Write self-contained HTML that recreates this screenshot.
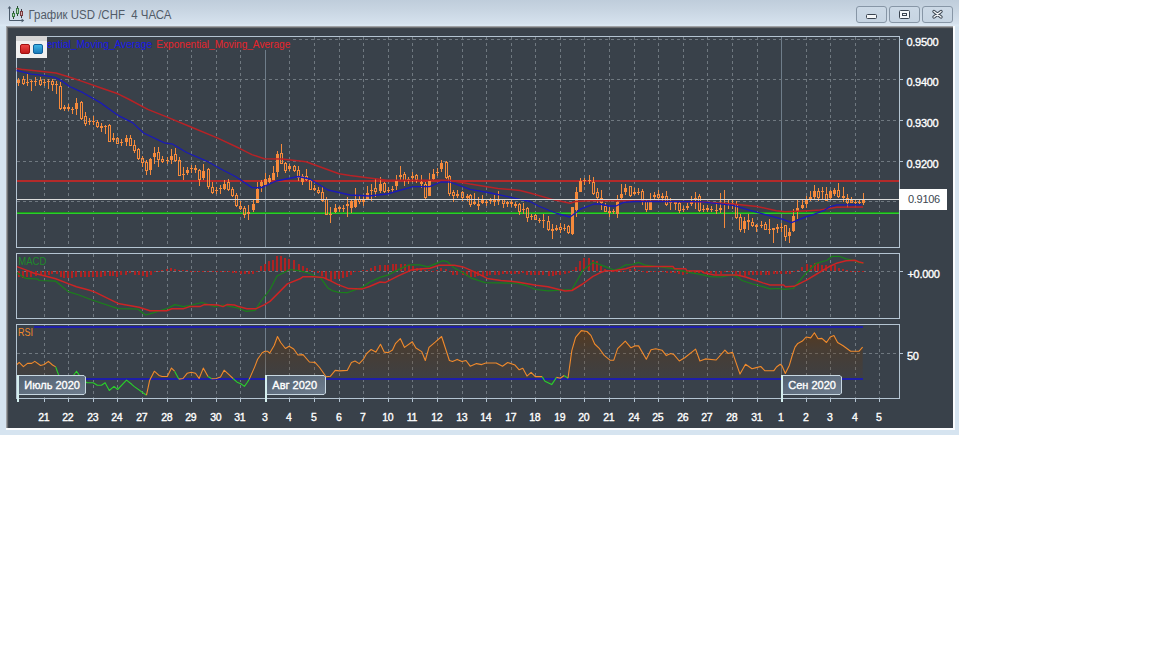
<!DOCTYPE html>
<html><head><meta charset="utf-8"><style>
html,body{margin:0;padding:0;background:#fff;width:1152px;height:648px;overflow:hidden}
#win{position:absolute;left:0;top:0;width:959px;height:435px;background:linear-gradient(#bfcddb,#c8d5e2 10px,#d6e2ee 24px,#dde9f4 25px,#d6e4f0 27px,#d6e4f0);}
#title{position:absolute;left:28px;top:6px;font-family:'Liberation Sans',sans-serif;font-size:11.5px;color:#4a5562;white-space:pre}
.btn{position:absolute;top:6px;width:29px;height:15px;border:1px solid #8796a6;border-radius:3px;background:linear-gradient(#ccd9e6,#c6d4e2)}
#dark{position:absolute;left:6px;top:26px;width:946px;height:401px;background:#39414a;border-top:1px solid #a0a2a6;border-left:1px solid #a0a2a6;box-shadow:inset 1px 1px 0 #6e7072, inset 2px 2px 0 #40464e}
#hl{position:absolute;left:6px;top:26px;width:949px;height:404px;background:#fbfdff}
svg{position:absolute;left:0;top:0}
</style></head><body>
<div id="win">
<div id="hl"></div>
<div id="dark"></div>

<div class="btn" style="left:856px"></div>
<div class="btn" style="left:889px"></div>
<div class="btn" style="left:922px"></div>
</div>
<svg width="1152" height="648">
<text x="28.5" y="19" font-family="Liberation Sans" font-size="12" fill="#525c68" textLength="143" lengthAdjust="spacingAndGlyphs">График USD /CHF&#160; 4 ЧАСА</text>
<g id="icon" fill="none" stroke-width="1">
<path d="M9.5 8 V20.5 H22" stroke="#4a5a6a"/>
<path d="M7.6 8.6 L9.5 6 L11.4 8.6 Z" fill="#4a5a6a" stroke="none"/>
<path d="M21.6 18.6 L24.2 20.5 L21.6 22.4 Z" fill="#4a5a6a" stroke="none"/>
<line x1="13.5" y1="11" x2="13.5" y2="19" stroke="#2e4a36"/>
<rect x="12.5" y="13.5" width="2" height="3" fill="#b8d8b8" stroke="#3a7a44"/>
<line x1="17.5" y1="6" x2="17.5" y2="16" stroke="#2e4a36"/>
<rect x="16.5" y="8.5" width="2" height="5" fill="#b8d8b8" stroke="#3a7a44"/>
<line x1="21.5" y1="9" x2="21.5" y2="18" stroke="#3a3a44"/>
<rect x="20.5" y="11.5" width="2" height="4" fill="#d0b0b0" stroke="#7a3a3e"/>
</g>
<g id="btnicons">
<rect x="866.5" y="14.5" width="10" height="4" rx="1" fill="#f4f6f8" stroke="#3a4450" stroke-width="1"/>
<rect x="899.5" y="10.5" width="10" height="8" rx="1" fill="#f4f6f8" stroke="#3a4450" stroke-width="1"/>
<rect x="902.5" y="13.5" width="4" height="2" fill="none" stroke="#3a4450" stroke-width="1"/>
<path d="M934 11.5 L941 17 M941 11.5 L934 17" stroke="#3a4450" stroke-width="3.4" stroke-linecap="round"/>
<path d="M934 11.5 L941 17 M941 11.5 L934 17" stroke="#f4f6f8" stroke-width="1.5" stroke-linecap="round"/>
</g>
<rect x="16.5" y="36.5" width="883" height="211" fill="none" stroke="#b4c4d2" stroke-width="1"/>
<line x1="44.5" y1="37" x2="44.5" y2="247" stroke="#6f7880" stroke-width="1" stroke-dasharray="3,3"/>
<line x1="68.5" y1="37" x2="68.5" y2="247" stroke="#6f7880" stroke-width="1" stroke-dasharray="3,3"/>
<line x1="93.5" y1="37" x2="93.5" y2="247" stroke="#6f7880" stroke-width="1" stroke-dasharray="3,3"/>
<line x1="117.5" y1="37" x2="117.5" y2="247" stroke="#6f7880" stroke-width="1" stroke-dasharray="3,3"/>
<line x1="142.5" y1="37" x2="142.5" y2="247" stroke="#6f7880" stroke-width="1" stroke-dasharray="3,3"/>
<line x1="167.5" y1="37" x2="167.5" y2="247" stroke="#6f7880" stroke-width="1" stroke-dasharray="3,3"/>
<line x1="191.5" y1="37" x2="191.5" y2="247" stroke="#6f7880" stroke-width="1" stroke-dasharray="3,3"/>
<line x1="216.5" y1="37" x2="216.5" y2="247" stroke="#6f7880" stroke-width="1" stroke-dasharray="3,3"/>
<line x1="240.5" y1="37" x2="240.5" y2="247" stroke="#6f7880" stroke-width="1" stroke-dasharray="3,3"/>
<line x1="289.5" y1="37" x2="289.5" y2="247" stroke="#6f7880" stroke-width="1" stroke-dasharray="3,3"/>
<line x1="314.5" y1="37" x2="314.5" y2="247" stroke="#6f7880" stroke-width="1" stroke-dasharray="3,3"/>
<line x1="339.5" y1="37" x2="339.5" y2="247" stroke="#6f7880" stroke-width="1" stroke-dasharray="3,3"/>
<line x1="363.5" y1="37" x2="363.5" y2="247" stroke="#6f7880" stroke-width="1" stroke-dasharray="3,3"/>
<line x1="388.5" y1="37" x2="388.5" y2="247" stroke="#6f7880" stroke-width="1" stroke-dasharray="3,3"/>
<line x1="412.5" y1="37" x2="412.5" y2="247" stroke="#6f7880" stroke-width="1" stroke-dasharray="3,3"/>
<line x1="437.5" y1="37" x2="437.5" y2="247" stroke="#6f7880" stroke-width="1" stroke-dasharray="3,3"/>
<line x1="462.5" y1="37" x2="462.5" y2="247" stroke="#6f7880" stroke-width="1" stroke-dasharray="3,3"/>
<line x1="486.5" y1="37" x2="486.5" y2="247" stroke="#6f7880" stroke-width="1" stroke-dasharray="3,3"/>
<line x1="511.5" y1="37" x2="511.5" y2="247" stroke="#6f7880" stroke-width="1" stroke-dasharray="3,3"/>
<line x1="535.5" y1="37" x2="535.5" y2="247" stroke="#6f7880" stroke-width="1" stroke-dasharray="3,3"/>
<line x1="560.5" y1="37" x2="560.5" y2="247" stroke="#6f7880" stroke-width="1" stroke-dasharray="3,3"/>
<line x1="584.5" y1="37" x2="584.5" y2="247" stroke="#6f7880" stroke-width="1" stroke-dasharray="3,3"/>
<line x1="609.5" y1="37" x2="609.5" y2="247" stroke="#6f7880" stroke-width="1" stroke-dasharray="3,3"/>
<line x1="634.5" y1="37" x2="634.5" y2="247" stroke="#6f7880" stroke-width="1" stroke-dasharray="3,3"/>
<line x1="658.5" y1="37" x2="658.5" y2="247" stroke="#6f7880" stroke-width="1" stroke-dasharray="3,3"/>
<line x1="683.5" y1="37" x2="683.5" y2="247" stroke="#6f7880" stroke-width="1" stroke-dasharray="3,3"/>
<line x1="707.5" y1="37" x2="707.5" y2="247" stroke="#6f7880" stroke-width="1" stroke-dasharray="3,3"/>
<line x1="732.5" y1="37" x2="732.5" y2="247" stroke="#6f7880" stroke-width="1" stroke-dasharray="3,3"/>
<line x1="757.5" y1="37" x2="757.5" y2="247" stroke="#6f7880" stroke-width="1" stroke-dasharray="3,3"/>
<line x1="806.5" y1="37" x2="806.5" y2="247" stroke="#6f7880" stroke-width="1" stroke-dasharray="3,3"/>
<line x1="830.5" y1="37" x2="830.5" y2="247" stroke="#6f7880" stroke-width="1" stroke-dasharray="3,3"/>
<line x1="855.5" y1="37" x2="855.5" y2="247" stroke="#6f7880" stroke-width="1" stroke-dasharray="3,3"/>
<line x1="879.5" y1="37" x2="879.5" y2="247" stroke="#6f7880" stroke-width="1" stroke-dasharray="3,3"/>
<line x1="265.5" y1="37" x2="265.5" y2="247" stroke="#6f7d8a" stroke-width="1"/>
<line x1="781.5" y1="37" x2="781.5" y2="247" stroke="#6f7d8a" stroke-width="1"/>
<rect x="16.5" y="253.5" width="883" height="65" fill="none" stroke="#b4c4d2" stroke-width="1"/>
<line x1="44.5" y1="254" x2="44.5" y2="318" stroke="#6f7880" stroke-width="1" stroke-dasharray="3,3"/>
<line x1="68.5" y1="254" x2="68.5" y2="318" stroke="#6f7880" stroke-width="1" stroke-dasharray="3,3"/>
<line x1="93.5" y1="254" x2="93.5" y2="318" stroke="#6f7880" stroke-width="1" stroke-dasharray="3,3"/>
<line x1="117.5" y1="254" x2="117.5" y2="318" stroke="#6f7880" stroke-width="1" stroke-dasharray="3,3"/>
<line x1="142.5" y1="254" x2="142.5" y2="318" stroke="#6f7880" stroke-width="1" stroke-dasharray="3,3"/>
<line x1="167.5" y1="254" x2="167.5" y2="318" stroke="#6f7880" stroke-width="1" stroke-dasharray="3,3"/>
<line x1="191.5" y1="254" x2="191.5" y2="318" stroke="#6f7880" stroke-width="1" stroke-dasharray="3,3"/>
<line x1="216.5" y1="254" x2="216.5" y2="318" stroke="#6f7880" stroke-width="1" stroke-dasharray="3,3"/>
<line x1="240.5" y1="254" x2="240.5" y2="318" stroke="#6f7880" stroke-width="1" stroke-dasharray="3,3"/>
<line x1="289.5" y1="254" x2="289.5" y2="318" stroke="#6f7880" stroke-width="1" stroke-dasharray="3,3"/>
<line x1="314.5" y1="254" x2="314.5" y2="318" stroke="#6f7880" stroke-width="1" stroke-dasharray="3,3"/>
<line x1="339.5" y1="254" x2="339.5" y2="318" stroke="#6f7880" stroke-width="1" stroke-dasharray="3,3"/>
<line x1="363.5" y1="254" x2="363.5" y2="318" stroke="#6f7880" stroke-width="1" stroke-dasharray="3,3"/>
<line x1="388.5" y1="254" x2="388.5" y2="318" stroke="#6f7880" stroke-width="1" stroke-dasharray="3,3"/>
<line x1="412.5" y1="254" x2="412.5" y2="318" stroke="#6f7880" stroke-width="1" stroke-dasharray="3,3"/>
<line x1="437.5" y1="254" x2="437.5" y2="318" stroke="#6f7880" stroke-width="1" stroke-dasharray="3,3"/>
<line x1="462.5" y1="254" x2="462.5" y2="318" stroke="#6f7880" stroke-width="1" stroke-dasharray="3,3"/>
<line x1="486.5" y1="254" x2="486.5" y2="318" stroke="#6f7880" stroke-width="1" stroke-dasharray="3,3"/>
<line x1="511.5" y1="254" x2="511.5" y2="318" stroke="#6f7880" stroke-width="1" stroke-dasharray="3,3"/>
<line x1="535.5" y1="254" x2="535.5" y2="318" stroke="#6f7880" stroke-width="1" stroke-dasharray="3,3"/>
<line x1="560.5" y1="254" x2="560.5" y2="318" stroke="#6f7880" stroke-width="1" stroke-dasharray="3,3"/>
<line x1="584.5" y1="254" x2="584.5" y2="318" stroke="#6f7880" stroke-width="1" stroke-dasharray="3,3"/>
<line x1="609.5" y1="254" x2="609.5" y2="318" stroke="#6f7880" stroke-width="1" stroke-dasharray="3,3"/>
<line x1="634.5" y1="254" x2="634.5" y2="318" stroke="#6f7880" stroke-width="1" stroke-dasharray="3,3"/>
<line x1="658.5" y1="254" x2="658.5" y2="318" stroke="#6f7880" stroke-width="1" stroke-dasharray="3,3"/>
<line x1="683.5" y1="254" x2="683.5" y2="318" stroke="#6f7880" stroke-width="1" stroke-dasharray="3,3"/>
<line x1="707.5" y1="254" x2="707.5" y2="318" stroke="#6f7880" stroke-width="1" stroke-dasharray="3,3"/>
<line x1="732.5" y1="254" x2="732.5" y2="318" stroke="#6f7880" stroke-width="1" stroke-dasharray="3,3"/>
<line x1="757.5" y1="254" x2="757.5" y2="318" stroke="#6f7880" stroke-width="1" stroke-dasharray="3,3"/>
<line x1="806.5" y1="254" x2="806.5" y2="318" stroke="#6f7880" stroke-width="1" stroke-dasharray="3,3"/>
<line x1="830.5" y1="254" x2="830.5" y2="318" stroke="#6f7880" stroke-width="1" stroke-dasharray="3,3"/>
<line x1="855.5" y1="254" x2="855.5" y2="318" stroke="#6f7880" stroke-width="1" stroke-dasharray="3,3"/>
<line x1="879.5" y1="254" x2="879.5" y2="318" stroke="#6f7880" stroke-width="1" stroke-dasharray="3,3"/>
<line x1="265.5" y1="254" x2="265.5" y2="318" stroke="#6f7d8a" stroke-width="1"/>
<line x1="781.5" y1="254" x2="781.5" y2="318" stroke="#6f7d8a" stroke-width="1"/>
<rect x="16.5" y="324.5" width="883" height="74" fill="none" stroke="#b4c4d2" stroke-width="1"/>
<line x1="44.5" y1="325" x2="44.5" y2="398" stroke="#6f7880" stroke-width="1" stroke-dasharray="3,3"/>
<line x1="68.5" y1="325" x2="68.5" y2="398" stroke="#6f7880" stroke-width="1" stroke-dasharray="3,3"/>
<line x1="93.5" y1="325" x2="93.5" y2="398" stroke="#6f7880" stroke-width="1" stroke-dasharray="3,3"/>
<line x1="117.5" y1="325" x2="117.5" y2="398" stroke="#6f7880" stroke-width="1" stroke-dasharray="3,3"/>
<line x1="142.5" y1="325" x2="142.5" y2="398" stroke="#6f7880" stroke-width="1" stroke-dasharray="3,3"/>
<line x1="167.5" y1="325" x2="167.5" y2="398" stroke="#6f7880" stroke-width="1" stroke-dasharray="3,3"/>
<line x1="191.5" y1="325" x2="191.5" y2="398" stroke="#6f7880" stroke-width="1" stroke-dasharray="3,3"/>
<line x1="216.5" y1="325" x2="216.5" y2="398" stroke="#6f7880" stroke-width="1" stroke-dasharray="3,3"/>
<line x1="240.5" y1="325" x2="240.5" y2="398" stroke="#6f7880" stroke-width="1" stroke-dasharray="3,3"/>
<line x1="289.5" y1="325" x2="289.5" y2="398" stroke="#6f7880" stroke-width="1" stroke-dasharray="3,3"/>
<line x1="314.5" y1="325" x2="314.5" y2="398" stroke="#6f7880" stroke-width="1" stroke-dasharray="3,3"/>
<line x1="339.5" y1="325" x2="339.5" y2="398" stroke="#6f7880" stroke-width="1" stroke-dasharray="3,3"/>
<line x1="363.5" y1="325" x2="363.5" y2="398" stroke="#6f7880" stroke-width="1" stroke-dasharray="3,3"/>
<line x1="388.5" y1="325" x2="388.5" y2="398" stroke="#6f7880" stroke-width="1" stroke-dasharray="3,3"/>
<line x1="412.5" y1="325" x2="412.5" y2="398" stroke="#6f7880" stroke-width="1" stroke-dasharray="3,3"/>
<line x1="437.5" y1="325" x2="437.5" y2="398" stroke="#6f7880" stroke-width="1" stroke-dasharray="3,3"/>
<line x1="462.5" y1="325" x2="462.5" y2="398" stroke="#6f7880" stroke-width="1" stroke-dasharray="3,3"/>
<line x1="486.5" y1="325" x2="486.5" y2="398" stroke="#6f7880" stroke-width="1" stroke-dasharray="3,3"/>
<line x1="511.5" y1="325" x2="511.5" y2="398" stroke="#6f7880" stroke-width="1" stroke-dasharray="3,3"/>
<line x1="535.5" y1="325" x2="535.5" y2="398" stroke="#6f7880" stroke-width="1" stroke-dasharray="3,3"/>
<line x1="560.5" y1="325" x2="560.5" y2="398" stroke="#6f7880" stroke-width="1" stroke-dasharray="3,3"/>
<line x1="584.5" y1="325" x2="584.5" y2="398" stroke="#6f7880" stroke-width="1" stroke-dasharray="3,3"/>
<line x1="609.5" y1="325" x2="609.5" y2="398" stroke="#6f7880" stroke-width="1" stroke-dasharray="3,3"/>
<line x1="634.5" y1="325" x2="634.5" y2="398" stroke="#6f7880" stroke-width="1" stroke-dasharray="3,3"/>
<line x1="658.5" y1="325" x2="658.5" y2="398" stroke="#6f7880" stroke-width="1" stroke-dasharray="3,3"/>
<line x1="683.5" y1="325" x2="683.5" y2="398" stroke="#6f7880" stroke-width="1" stroke-dasharray="3,3"/>
<line x1="707.5" y1="325" x2="707.5" y2="398" stroke="#6f7880" stroke-width="1" stroke-dasharray="3,3"/>
<line x1="732.5" y1="325" x2="732.5" y2="398" stroke="#6f7880" stroke-width="1" stroke-dasharray="3,3"/>
<line x1="757.5" y1="325" x2="757.5" y2="398" stroke="#6f7880" stroke-width="1" stroke-dasharray="3,3"/>
<line x1="806.5" y1="325" x2="806.5" y2="398" stroke="#6f7880" stroke-width="1" stroke-dasharray="3,3"/>
<line x1="830.5" y1="325" x2="830.5" y2="398" stroke="#6f7880" stroke-width="1" stroke-dasharray="3,3"/>
<line x1="855.5" y1="325" x2="855.5" y2="398" stroke="#6f7880" stroke-width="1" stroke-dasharray="3,3"/>
<line x1="879.5" y1="325" x2="879.5" y2="398" stroke="#6f7880" stroke-width="1" stroke-dasharray="3,3"/>
<line x1="265.5" y1="325" x2="265.5" y2="398" stroke="#6f7d8a" stroke-width="1"/>
<line x1="781.5" y1="325" x2="781.5" y2="398" stroke="#6f7d8a" stroke-width="1"/>
<line x1="17" y1="39.5" x2="899" y2="39.5" stroke="#6f7880" stroke-width="1" stroke-dasharray="3,3"/>
<line x1="899" y1="39.5" x2="903" y2="39.5" stroke="#b4c4d2" stroke-width="1"/>
<line x1="17" y1="79.5" x2="899" y2="79.5" stroke="#6f7880" stroke-width="1" stroke-dasharray="3,3"/>
<line x1="899" y1="79.5" x2="903" y2="79.5" stroke="#b4c4d2" stroke-width="1"/>
<line x1="17" y1="120.5" x2="899" y2="120.5" stroke="#6f7880" stroke-width="1" stroke-dasharray="3,3"/>
<line x1="899" y1="120.5" x2="903" y2="120.5" stroke="#b4c4d2" stroke-width="1"/>
<line x1="17" y1="161.5" x2="899" y2="161.5" stroke="#6f7880" stroke-width="1" stroke-dasharray="3,3"/>
<line x1="899" y1="161.5" x2="903" y2="161.5" stroke="#b4c4d2" stroke-width="1"/>
<line x1="17" y1="201.5" x2="899" y2="201.5" stroke="#6f7880" stroke-width="1" stroke-dasharray="3,3"/>
<line x1="899" y1="201.5" x2="903" y2="201.5" stroke="#b4c4d2" stroke-width="1"/>
<line x1="17" y1="271.5" x2="899" y2="271.5" stroke="#6f7880" stroke-width="1" stroke-dasharray="3,3"/>
<line x1="899" y1="271.5" x2="903" y2="271.5" stroke="#b4c4d2" stroke-width="1"/>
<line x1="17" y1="353.5" x2="899" y2="353.5" stroke="#6f7880" stroke-width="1" stroke-dasharray="3,3"/>
<line x1="899" y1="353.5" x2="903" y2="353.5" stroke="#b4c4d2" stroke-width="1"/>
<line x1="44.5" y1="398" x2="44.5" y2="402" stroke="#b4c4d2" stroke-width="1"/>
<line x1="68.5" y1="398" x2="68.5" y2="402" stroke="#b4c4d2" stroke-width="1"/>
<line x1="93.5" y1="398" x2="93.5" y2="402" stroke="#b4c4d2" stroke-width="1"/>
<line x1="117.5" y1="398" x2="117.5" y2="402" stroke="#b4c4d2" stroke-width="1"/>
<line x1="142.5" y1="398" x2="142.5" y2="402" stroke="#b4c4d2" stroke-width="1"/>
<line x1="167.5" y1="398" x2="167.5" y2="402" stroke="#b4c4d2" stroke-width="1"/>
<line x1="191.5" y1="398" x2="191.5" y2="402" stroke="#b4c4d2" stroke-width="1"/>
<line x1="216.5" y1="398" x2="216.5" y2="402" stroke="#b4c4d2" stroke-width="1"/>
<line x1="240.5" y1="398" x2="240.5" y2="402" stroke="#b4c4d2" stroke-width="1"/>
<line x1="265.5" y1="398" x2="265.5" y2="402" stroke="#b4c4d2" stroke-width="1"/>
<line x1="289.5" y1="398" x2="289.5" y2="402" stroke="#b4c4d2" stroke-width="1"/>
<line x1="314.5" y1="398" x2="314.5" y2="402" stroke="#b4c4d2" stroke-width="1"/>
<line x1="339.5" y1="398" x2="339.5" y2="402" stroke="#b4c4d2" stroke-width="1"/>
<line x1="363.5" y1="398" x2="363.5" y2="402" stroke="#b4c4d2" stroke-width="1"/>
<line x1="388.5" y1="398" x2="388.5" y2="402" stroke="#b4c4d2" stroke-width="1"/>
<line x1="412.5" y1="398" x2="412.5" y2="402" stroke="#b4c4d2" stroke-width="1"/>
<line x1="437.5" y1="398" x2="437.5" y2="402" stroke="#b4c4d2" stroke-width="1"/>
<line x1="462.5" y1="398" x2="462.5" y2="402" stroke="#b4c4d2" stroke-width="1"/>
<line x1="486.5" y1="398" x2="486.5" y2="402" stroke="#b4c4d2" stroke-width="1"/>
<line x1="511.5" y1="398" x2="511.5" y2="402" stroke="#b4c4d2" stroke-width="1"/>
<line x1="535.5" y1="398" x2="535.5" y2="402" stroke="#b4c4d2" stroke-width="1"/>
<line x1="560.5" y1="398" x2="560.5" y2="402" stroke="#b4c4d2" stroke-width="1"/>
<line x1="584.5" y1="398" x2="584.5" y2="402" stroke="#b4c4d2" stroke-width="1"/>
<line x1="609.5" y1="398" x2="609.5" y2="402" stroke="#b4c4d2" stroke-width="1"/>
<line x1="634.5" y1="398" x2="634.5" y2="402" stroke="#b4c4d2" stroke-width="1"/>
<line x1="658.5" y1="398" x2="658.5" y2="402" stroke="#b4c4d2" stroke-width="1"/>
<line x1="683.5" y1="398" x2="683.5" y2="402" stroke="#b4c4d2" stroke-width="1"/>
<line x1="707.5" y1="398" x2="707.5" y2="402" stroke="#b4c4d2" stroke-width="1"/>
<line x1="732.5" y1="398" x2="732.5" y2="402" stroke="#b4c4d2" stroke-width="1"/>
<line x1="757.5" y1="398" x2="757.5" y2="402" stroke="#b4c4d2" stroke-width="1"/>
<line x1="781.5" y1="398" x2="781.5" y2="402" stroke="#b4c4d2" stroke-width="1"/>
<line x1="806.5" y1="398" x2="806.5" y2="402" stroke="#b4c4d2" stroke-width="1"/>
<line x1="830.5" y1="398" x2="830.5" y2="402" stroke="#b4c4d2" stroke-width="1"/>
<line x1="855.5" y1="398" x2="855.5" y2="402" stroke="#b4c4d2" stroke-width="1"/>
<line x1="879.5" y1="398" x2="879.5" y2="402" stroke="#b4c4d2" stroke-width="1"/>
<rect x="17" y="254" width="30" height="12" fill="#39414a"/>
<rect x="17" y="325" width="17" height="13" fill="#39414a"/>
<line x1="17" y1="181" x2="899" y2="181" stroke="#b42a2a" stroke-width="2"/>
<line x1="17" y1="212.5" x2="899" y2="212.5" stroke="#1c9a1c" stroke-width="1"/><line x1="17" y1="213.5" x2="899" y2="213.5" stroke="#2ccc2c" stroke-width="1"/>
<g stroke="#f58a3c" stroke-width="1"><rect x="17" y="80" width="3" height="3" fill="#f58a3c" stroke="none"/><line x1="18.5" y1="78" x2="18.5" y2="80"/><line x1="18.5" y1="83" x2="18.5" y2="86"/><rect x="22.5" y="79.5" width="2" height="4" fill="none"/><line x1="23.5" y1="76" x2="23.5" y2="79"/><line x1="23.5" y1="84" x2="23.5" y2="85"/><rect x="26" y="82" width="3" height="1" fill="#f58a3c" stroke="none"/><line x1="27.5" y1="74" x2="27.5" y2="82"/><line x1="27.5" y1="83" x2="27.5" y2="86"/><rect x="30" y="81" width="3" height="1" fill="#f58a3c" stroke="none"/><line x1="31.5" y1="80" x2="31.5" y2="81"/><line x1="31.5" y1="82" x2="31.5" y2="91"/><rect x="34" y="81" width="3" height="1" fill="#f58a3c" stroke="none"/><line x1="35.5" y1="77" x2="35.5" y2="81"/><line x1="35.5" y1="82" x2="35.5" y2="86"/><rect x="39.5" y="80.5" width="2" height="4" fill="none"/><line x1="40.5" y1="77" x2="40.5" y2="80"/><line x1="40.5" y1="85" x2="40.5" y2="86"/><rect x="43" y="82" width="3" height="1" fill="#f58a3c" stroke="none"/><line x1="44.5" y1="79" x2="44.5" y2="82"/><line x1="44.5" y1="83" x2="44.5" y2="86"/><rect x="47" y="81" width="3" height="1" fill="#f58a3c" stroke="none"/><line x1="48.5" y1="79" x2="48.5" y2="81"/><line x1="48.5" y1="82" x2="48.5" y2="89"/><rect x="51.5" y="81.5" width="2" height="3" fill="none"/><line x1="52.5" y1="79" x2="52.5" y2="81"/><line x1="52.5" y1="85" x2="52.5" y2="91"/><rect x="55" y="84" width="3" height="1" fill="#f58a3c" stroke="none"/><line x1="56.5" y1="81" x2="56.5" y2="84"/><line x1="56.5" y1="85" x2="56.5" y2="94"/><rect x="59.5" y="86.5" width="2" height="22" fill="none"/><line x1="60.5" y1="82" x2="60.5" y2="86"/><line x1="60.5" y1="109" x2="60.5" y2="110"/><rect x="63" y="107" width="3" height="2" fill="#f58a3c" stroke="none"/><line x1="64.5" y1="105" x2="64.5" y2="107"/><line x1="64.5" y1="109" x2="64.5" y2="111"/><rect x="67" y="107" width="3" height="2" fill="#f58a3c" stroke="none"/><line x1="68.5" y1="104" x2="68.5" y2="107"/><line x1="68.5" y1="109" x2="68.5" y2="111"/><rect x="71" y="109" width="3" height="1" fill="#f58a3c" stroke="none"/><line x1="72.5" y1="107" x2="72.5" y2="109"/><line x1="72.5" y1="110" x2="72.5" y2="114"/><rect x="75" y="103" width="3" height="6" fill="#f58a3c" stroke="none"/><line x1="76.5" y1="98" x2="76.5" y2="103"/><line x1="76.5" y1="109" x2="76.5" y2="115"/><rect x="80.5" y="102.5" width="2" height="16" fill="none"/><line x1="81.5" y1="101" x2="81.5" y2="102"/><line x1="81.5" y1="119" x2="81.5" y2="120"/><rect x="84.5" y="116.5" width="2" height="7" fill="none"/><line x1="85.5" y1="112" x2="85.5" y2="116"/><line x1="85.5" y1="124" x2="85.5" y2="126"/><rect x="88" y="121" width="3" height="1" fill="#f58a3c" stroke="none"/><line x1="89.5" y1="118" x2="89.5" y2="121"/><line x1="89.5" y1="122" x2="89.5" y2="125"/><rect x="92" y="121" width="3" height="1" fill="#f58a3c" stroke="none"/><line x1="93.5" y1="116" x2="93.5" y2="121"/><line x1="93.5" y1="122" x2="93.5" y2="125"/><rect x="96.5" y="122.5" width="2" height="4" fill="none"/><line x1="97.5" y1="120" x2="97.5" y2="122"/><line x1="97.5" y1="127" x2="97.5" y2="128"/><rect x="100" y="126" width="3" height="2" fill="#f58a3c" stroke="none"/><line x1="101.5" y1="123" x2="101.5" y2="126"/><line x1="101.5" y1="128" x2="101.5" y2="132"/><rect x="104" y="126" width="3" height="1" fill="#f58a3c" stroke="none"/><line x1="105.5" y1="125" x2="105.5" y2="126"/><line x1="105.5" y1="127" x2="105.5" y2="134"/><rect x="108.5" y="125.5" width="2" height="16" fill="none"/><line x1="109.5" y1="124" x2="109.5" y2="125"/><rect x="112" y="138" width="3" height="2" fill="#f58a3c" stroke="none"/><line x1="113.5" y1="133" x2="113.5" y2="138"/><line x1="113.5" y1="140" x2="113.5" y2="142"/><rect x="116.5" y="138.5" width="2" height="5" fill="none"/><line x1="117.5" y1="137" x2="117.5" y2="138"/><rect x="120" y="142" width="3" height="1" fill="#f58a3c" stroke="none"/><line x1="121.5" y1="139" x2="121.5" y2="142"/><line x1="121.5" y1="143" x2="121.5" y2="146"/><rect x="125" y="138" width="3" height="4" fill="#f58a3c" stroke="none"/><line x1="126.5" y1="135" x2="126.5" y2="138"/><line x1="126.5" y1="142" x2="126.5" y2="146"/><rect x="129.5" y="138.5" width="2" height="7" fill="none"/><line x1="130.5" y1="135" x2="130.5" y2="138"/><rect x="133.5" y="145.5" width="2" height="5" fill="none"/><line x1="134.5" y1="140" x2="134.5" y2="145"/><line x1="134.5" y1="151" x2="134.5" y2="153"/><rect x="137.5" y="149.5" width="2" height="9" fill="none"/><line x1="138.5" y1="148" x2="138.5" y2="149"/><line x1="138.5" y1="159" x2="138.5" y2="160"/><rect x="141.5" y="158.5" width="2" height="4" fill="none"/><line x1="142.5" y1="156" x2="142.5" y2="158"/><line x1="142.5" y1="163" x2="142.5" y2="167"/><rect x="145.5" y="162.5" width="2" height="8" fill="none"/><line x1="146.5" y1="160" x2="146.5" y2="162"/><line x1="146.5" y1="171" x2="146.5" y2="175"/><rect x="149" y="159" width="3" height="11" fill="#f58a3c" stroke="none"/><line x1="150.5" y1="158" x2="150.5" y2="159"/><line x1="150.5" y1="170" x2="150.5" y2="175"/><rect x="153" y="153" width="3" height="4" fill="#f58a3c" stroke="none"/><line x1="154.5" y1="147" x2="154.5" y2="153"/><line x1="154.5" y1="157" x2="154.5" y2="164"/><rect x="157.5" y="152.5" width="2" height="7" fill="none"/><line x1="158.5" y1="147" x2="158.5" y2="152"/><line x1="158.5" y1="160" x2="158.5" y2="167"/><rect x="161.5" y="159.5" width="2" height="2" fill="none"/><line x1="162.5" y1="156" x2="162.5" y2="159"/><line x1="162.5" y1="162" x2="162.5" y2="163"/><rect x="166" y="160" width="3" height="1" fill="#f58a3c" stroke="none"/><line x1="167.5" y1="157" x2="167.5" y2="160"/><line x1="167.5" y1="161" x2="167.5" y2="164"/><rect x="170" y="156" width="3" height="4" fill="#f58a3c" stroke="none"/><line x1="171.5" y1="149" x2="171.5" y2="156"/><line x1="171.5" y1="160" x2="171.5" y2="164"/><rect x="174.5" y="154.5" width="2" height="6" fill="none"/><line x1="175.5" y1="148" x2="175.5" y2="154"/><line x1="175.5" y1="161" x2="175.5" y2="162"/><rect x="178.5" y="160.5" width="2" height="15" fill="none"/><line x1="179.5" y1="157" x2="179.5" y2="160"/><rect x="182" y="174" width="3" height="1" fill="#f58a3c" stroke="none"/><line x1="183.5" y1="167" x2="183.5" y2="174"/><line x1="183.5" y1="175" x2="183.5" y2="180"/><rect x="186" y="170" width="3" height="3" fill="#f58a3c" stroke="none"/><line x1="187.5" y1="167" x2="187.5" y2="170"/><line x1="187.5" y1="173" x2="187.5" y2="175"/><rect x="190" y="168" width="3" height="1" fill="#f58a3c" stroke="none"/><line x1="191.5" y1="165" x2="191.5" y2="168"/><line x1="191.5" y1="169" x2="191.5" y2="173"/><rect x="194" y="168" width="3" height="2" fill="#f58a3c" stroke="none"/><line x1="195.5" y1="165" x2="195.5" y2="168"/><line x1="195.5" y1="170" x2="195.5" y2="173"/><rect x="198.5" y="170.5" width="2" height="9" fill="none"/><line x1="199.5" y1="169" x2="199.5" y2="170"/><line x1="199.5" y1="180" x2="199.5" y2="186"/><rect x="202" y="171" width="3" height="7" fill="#f58a3c" stroke="none"/><line x1="203.5" y1="164" x2="203.5" y2="171"/><line x1="203.5" y1="178" x2="203.5" y2="180"/><rect x="207.5" y="169.5" width="2" height="17" fill="none"/><line x1="208.5" y1="168" x2="208.5" y2="169"/><line x1="208.5" y1="187" x2="208.5" y2="189"/><rect x="211.5" y="187.5" width="2" height="5" fill="none"/><line x1="212.5" y1="182" x2="212.5" y2="187"/><line x1="212.5" y1="193" x2="212.5" y2="194"/><rect x="215" y="190" width="3" height="1" fill="#f58a3c" stroke="none"/><line x1="216.5" y1="187" x2="216.5" y2="190"/><line x1="216.5" y1="191" x2="216.5" y2="194"/><rect x="219" y="188" width="3" height="1" fill="#f58a3c" stroke="none"/><line x1="220.5" y1="185" x2="220.5" y2="188"/><line x1="220.5" y1="189" x2="220.5" y2="194"/><rect x="223" y="184" width="3" height="5" fill="#f58a3c" stroke="none"/><line x1="224.5" y1="180" x2="224.5" y2="184"/><line x1="224.5" y1="189" x2="224.5" y2="190"/><rect x="227.5" y="182.5" width="2" height="7" fill="none"/><line x1="228.5" y1="179" x2="228.5" y2="182"/><line x1="228.5" y1="190" x2="228.5" y2="191"/><rect x="231.5" y="189.5" width="2" height="6" fill="none"/><line x1="232.5" y1="187" x2="232.5" y2="189"/><line x1="232.5" y1="196" x2="232.5" y2="197"/><rect x="235.5" y="195.5" width="2" height="10" fill="none"/><line x1="236.5" y1="193" x2="236.5" y2="195"/><line x1="236.5" y1="206" x2="236.5" y2="207"/><rect x="239.5" y="206.5" width="2" height="2" fill="none"/><line x1="240.5" y1="201" x2="240.5" y2="206"/><line x1="240.5" y1="209" x2="240.5" y2="210"/><rect x="243.5" y="208.5" width="2" height="6" fill="none"/><line x1="244.5" y1="206" x2="244.5" y2="208"/><line x1="244.5" y1="215" x2="244.5" y2="218"/><rect x="247" y="212" width="3" height="2" fill="#f58a3c" stroke="none"/><line x1="248.5" y1="205" x2="248.5" y2="212"/><line x1="248.5" y1="214" x2="248.5" y2="220"/><rect x="252" y="204" width="3" height="6" fill="#f58a3c" stroke="none"/><line x1="253.5" y1="200" x2="253.5" y2="204"/><line x1="253.5" y1="210" x2="253.5" y2="212"/><rect x="256" y="189" width="3" height="14" fill="#f58a3c" stroke="none"/><line x1="257.5" y1="182" x2="257.5" y2="189"/><rect x="260" y="182" width="3" height="4" fill="#f58a3c" stroke="none"/><line x1="261.5" y1="180" x2="261.5" y2="182"/><line x1="261.5" y1="186" x2="261.5" y2="192"/><rect x="264" y="179" width="3" height="6" fill="#f58a3c" stroke="none"/><line x1="265.5" y1="173" x2="265.5" y2="179"/><line x1="265.5" y1="185" x2="265.5" y2="187"/><rect x="268" y="178" width="3" height="4" fill="#f58a3c" stroke="none"/><line x1="269.5" y1="175" x2="269.5" y2="178"/><line x1="269.5" y1="182" x2="269.5" y2="184"/><rect x="272" y="173" width="3" height="7" fill="#f58a3c" stroke="none"/><line x1="273.5" y1="166" x2="273.5" y2="173"/><rect x="276" y="154" width="3" height="18" fill="#f58a3c" stroke="none"/><line x1="277.5" y1="151" x2="277.5" y2="154"/><line x1="277.5" y1="172" x2="277.5" y2="177"/><rect x="280.5" y="153.5" width="2" height="10" fill="none"/><line x1="281.5" y1="144" x2="281.5" y2="153"/><rect x="284.5" y="163.5" width="2" height="7" fill="none"/><line x1="285.5" y1="162" x2="285.5" y2="163"/><line x1="285.5" y1="171" x2="285.5" y2="173"/><rect x="288" y="166" width="3" height="3" fill="#f58a3c" stroke="none"/><line x1="289.5" y1="164" x2="289.5" y2="166"/><line x1="289.5" y1="169" x2="289.5" y2="171"/><rect x="293.5" y="166.5" width="2" height="4" fill="none"/><line x1="294.5" y1="165" x2="294.5" y2="166"/><line x1="294.5" y1="171" x2="294.5" y2="172"/><rect x="297.5" y="170.5" width="2" height="7" fill="none"/><line x1="298.5" y1="166" x2="298.5" y2="170"/><line x1="298.5" y1="178" x2="298.5" y2="181"/><rect x="301" y="176" width="3" height="6" fill="#f58a3c" stroke="none"/><line x1="302.5" y1="174" x2="302.5" y2="176"/><line x1="302.5" y1="182" x2="302.5" y2="185"/><rect x="305.5" y="176.5" width="2" height="3" fill="none"/><line x1="306.5" y1="169" x2="306.5" y2="176"/><line x1="306.5" y1="180" x2="306.5" y2="181"/><rect x="309.5" y="180.5" width="2" height="9" fill="none"/><line x1="310.5" y1="179" x2="310.5" y2="180"/><rect x="313" y="188" width="3" height="2" fill="#f58a3c" stroke="none"/><line x1="314.5" y1="185" x2="314.5" y2="188"/><line x1="314.5" y1="190" x2="314.5" y2="191"/><rect x="317.5" y="190.5" width="2" height="2" fill="none"/><line x1="318.5" y1="187" x2="318.5" y2="190"/><line x1="318.5" y1="193" x2="318.5" y2="194"/><rect x="321.5" y="192.5" width="2" height="8" fill="none"/><line x1="322.5" y1="187" x2="322.5" y2="192"/><line x1="322.5" y1="201" x2="322.5" y2="202"/><rect x="325.5" y="199.5" width="2" height="15" fill="none"/><line x1="326.5" y1="197" x2="326.5" y2="199"/><rect x="329" y="214" width="3" height="1" fill="#f58a3c" stroke="none"/><line x1="330.5" y1="207" x2="330.5" y2="214"/><line x1="330.5" y1="215" x2="330.5" y2="223"/><rect x="334" y="208" width="3" height="4" fill="#f58a3c" stroke="none"/><line x1="335.5" y1="204" x2="335.5" y2="208"/><line x1="335.5" y1="212" x2="335.5" y2="213"/><rect x="338" y="207" width="3" height="2" fill="#f58a3c" stroke="none"/><line x1="339.5" y1="206" x2="339.5" y2="207"/><line x1="339.5" y1="209" x2="339.5" y2="212"/><rect x="342" y="208" width="3" height="1" fill="#f58a3c" stroke="none"/><line x1="343.5" y1="205" x2="343.5" y2="208"/><line x1="343.5" y1="209" x2="343.5" y2="212"/><rect x="346" y="204" width="3" height="2" fill="#f58a3c" stroke="none"/><line x1="347.5" y1="197" x2="347.5" y2="204"/><line x1="347.5" y1="206" x2="347.5" y2="217"/><rect x="350" y="201" width="3" height="7" fill="#f58a3c" stroke="none"/><line x1="351.5" y1="200" x2="351.5" y2="201"/><line x1="351.5" y1="208" x2="351.5" y2="213"/><rect x="354" y="199" width="3" height="8" fill="#f58a3c" stroke="none"/><line x1="355.5" y1="188" x2="355.5" y2="199"/><line x1="355.5" y1="207" x2="355.5" y2="208"/><rect x="358.5" y="199.5" width="2" height="2" fill="none"/><line x1="359.5" y1="196" x2="359.5" y2="199"/><line x1="359.5" y1="202" x2="359.5" y2="204"/><rect x="362" y="199" width="3" height="3" fill="#f58a3c" stroke="none"/><line x1="363.5" y1="196" x2="363.5" y2="199"/><line x1="363.5" y1="202" x2="363.5" y2="206"/><rect x="366" y="193" width="3" height="6" fill="#f58a3c" stroke="none"/><line x1="367.5" y1="186" x2="367.5" y2="193"/><rect x="370" y="190" width="3" height="1" fill="#f58a3c" stroke="none"/><line x1="371.5" y1="184" x2="371.5" y2="190"/><line x1="371.5" y1="191" x2="371.5" y2="201"/><rect x="374.5" y="188.5" width="2" height="3" fill="none"/><line x1="375.5" y1="178" x2="375.5" y2="188"/><line x1="375.5" y1="192" x2="375.5" y2="197"/><rect x="379" y="184" width="3" height="7" fill="#f58a3c" stroke="none"/><line x1="380.5" y1="177" x2="380.5" y2="184"/><line x1="380.5" y1="191" x2="380.5" y2="193"/><rect x="383.5" y="183.5" width="2" height="8" fill="none"/><line x1="384.5" y1="182" x2="384.5" y2="183"/><line x1="384.5" y1="192" x2="384.5" y2="193"/><rect x="387" y="190" width="3" height="1" fill="#f58a3c" stroke="none"/><line x1="388.5" y1="187" x2="388.5" y2="190"/><line x1="388.5" y1="191" x2="388.5" y2="193"/><rect x="391" y="189" width="3" height="1" fill="#f58a3c" stroke="none"/><line x1="392.5" y1="186" x2="392.5" y2="189"/><line x1="392.5" y1="190" x2="392.5" y2="192"/><rect x="395" y="180" width="3" height="6" fill="#f58a3c" stroke="none"/><line x1="396.5" y1="175" x2="396.5" y2="180"/><line x1="396.5" y1="186" x2="396.5" y2="190"/><rect x="399" y="175" width="3" height="2" fill="#f58a3c" stroke="none"/><line x1="400.5" y1="166" x2="400.5" y2="175"/><line x1="400.5" y1="177" x2="400.5" y2="181"/><rect x="403.5" y="174.5" width="2" height="6" fill="none"/><line x1="404.5" y1="172" x2="404.5" y2="174"/><line x1="404.5" y1="181" x2="404.5" y2="186"/><rect x="407" y="179" width="3" height="2" fill="#f58a3c" stroke="none"/><line x1="408.5" y1="177" x2="408.5" y2="179"/><line x1="408.5" y1="181" x2="408.5" y2="184"/><rect x="411" y="176" width="3" height="2" fill="#f58a3c" stroke="none"/><line x1="412.5" y1="172" x2="412.5" y2="176"/><line x1="412.5" y1="178" x2="412.5" y2="182"/><rect x="415.5" y="175.5" width="2" height="4" fill="none"/><line x1="416.5" y1="174" x2="416.5" y2="175"/><line x1="416.5" y1="180" x2="416.5" y2="183"/><rect x="420" y="182" width="3" height="2" fill="#f58a3c" stroke="none"/><line x1="421.5" y1="175" x2="421.5" y2="182"/><line x1="421.5" y1="184" x2="421.5" y2="188"/><rect x="424.5" y="184.5" width="2" height="13" fill="none"/><line x1="425.5" y1="182" x2="425.5" y2="184"/><line x1="425.5" y1="198" x2="425.5" y2="199"/><rect x="428" y="180" width="3" height="16" fill="#f58a3c" stroke="none"/><line x1="429.5" y1="173" x2="429.5" y2="180"/><rect x="432" y="174" width="3" height="5" fill="#f58a3c" stroke="none"/><line x1="433.5" y1="169" x2="433.5" y2="174"/><line x1="433.5" y1="179" x2="433.5" y2="180"/><rect x="436" y="172" width="3" height="1" fill="#f58a3c" stroke="none"/><line x1="437.5" y1="168" x2="437.5" y2="172"/><line x1="437.5" y1="173" x2="437.5" y2="176"/><rect x="440" y="163" width="3" height="6" fill="#f58a3c" stroke="none"/><line x1="441.5" y1="160" x2="441.5" y2="163"/><line x1="441.5" y1="169" x2="441.5" y2="172"/><rect x="445.5" y="162.5" width="2" height="15" fill="none"/><line x1="446.5" y1="161" x2="446.5" y2="162"/><line x1="446.5" y1="178" x2="446.5" y2="179"/><rect x="448.5" y="176.5" width="2" height="17" fill="none"/><line x1="449.5" y1="175" x2="449.5" y2="176"/><line x1="449.5" y1="194" x2="449.5" y2="196"/><rect x="452.5" y="192.5" width="2" height="3" fill="none"/><line x1="453.5" y1="190" x2="453.5" y2="192"/><line x1="453.5" y1="196" x2="453.5" y2="202"/><rect x="456" y="194" width="3" height="2" fill="#f58a3c" stroke="none"/><line x1="457.5" y1="190" x2="457.5" y2="194"/><line x1="457.5" y1="196" x2="457.5" y2="198"/><rect x="461.5" y="192.5" width="2" height="5" fill="none"/><line x1="462.5" y1="191" x2="462.5" y2="192"/><line x1="462.5" y1="198" x2="462.5" y2="201"/><rect x="466" y="196" width="3" height="2" fill="#f58a3c" stroke="none"/><line x1="467.5" y1="194" x2="467.5" y2="196"/><line x1="467.5" y1="198" x2="467.5" y2="201"/><rect x="469.5" y="195.5" width="2" height="9" fill="none"/><line x1="470.5" y1="194" x2="470.5" y2="195"/><line x1="470.5" y1="205" x2="470.5" y2="207"/><rect x="473" y="202" width="3" height="2" fill="#f58a3c" stroke="none"/><line x1="474.5" y1="193" x2="474.5" y2="202"/><line x1="474.5" y1="204" x2="474.5" y2="205"/><rect x="477" y="204" width="3" height="2" fill="#f58a3c" stroke="none"/><line x1="478.5" y1="197" x2="478.5" y2="204"/><line x1="478.5" y1="206" x2="478.5" y2="210"/><rect x="481" y="199" width="3" height="4" fill="#f58a3c" stroke="none"/><line x1="482.5" y1="195" x2="482.5" y2="199"/><line x1="482.5" y1="203" x2="482.5" y2="204"/><rect x="485" y="202" width="3" height="1" fill="#f58a3c" stroke="none"/><line x1="486.5" y1="199" x2="486.5" y2="202"/><line x1="486.5" y1="203" x2="486.5" y2="206"/><rect x="489" y="200" width="3" height="1" fill="#f58a3c" stroke="none"/><line x1="490.5" y1="198" x2="490.5" y2="200"/><line x1="490.5" y1="201" x2="490.5" y2="204"/><rect x="493" y="200" width="3" height="2" fill="#f58a3c" stroke="none"/><line x1="494.5" y1="195" x2="494.5" y2="200"/><line x1="494.5" y1="202" x2="494.5" y2="206"/><rect x="497" y="200" width="3" height="1" fill="#f58a3c" stroke="none"/><line x1="498.5" y1="191" x2="498.5" y2="200"/><line x1="498.5" y1="201" x2="498.5" y2="205"/><rect x="502.5" y="199.5" width="2" height="4" fill="none"/><line x1="503.5" y1="204" x2="503.5" y2="208"/><rect x="506" y="202" width="3" height="2" fill="#f58a3c" stroke="none"/><line x1="507.5" y1="201" x2="507.5" y2="202"/><line x1="507.5" y1="204" x2="507.5" y2="207"/><rect x="510" y="202" width="3" height="2" fill="#f58a3c" stroke="none"/><line x1="511.5" y1="200" x2="511.5" y2="202"/><line x1="511.5" y1="204" x2="511.5" y2="207"/><rect x="514" y="204" width="3" height="2" fill="#f58a3c" stroke="none"/><line x1="515.5" y1="202" x2="515.5" y2="204"/><line x1="515.5" y1="206" x2="515.5" y2="208"/><rect x="518.5" y="204.5" width="2" height="7" fill="none"/><line x1="519.5" y1="203" x2="519.5" y2="204"/><line x1="519.5" y1="212" x2="519.5" y2="215"/><rect x="522" y="209" width="3" height="1" fill="#f58a3c" stroke="none"/><line x1="523.5" y1="203" x2="523.5" y2="209"/><line x1="523.5" y1="210" x2="523.5" y2="214"/><rect x="526.5" y="208.5" width="2" height="9" fill="none"/><line x1="527.5" y1="207" x2="527.5" y2="208"/><line x1="527.5" y1="218" x2="527.5" y2="222"/><rect x="530" y="216" width="3" height="1" fill="#f58a3c" stroke="none"/><line x1="531.5" y1="214" x2="531.5" y2="216"/><line x1="531.5" y1="217" x2="531.5" y2="220"/><rect x="534.5" y="215.5" width="2" height="4" fill="none"/><line x1="535.5" y1="214" x2="535.5" y2="215"/><rect x="538" y="220" width="3" height="1" fill="#f58a3c" stroke="none"/><line x1="539.5" y1="218" x2="539.5" y2="220"/><line x1="539.5" y1="221" x2="539.5" y2="223"/><rect x="542" y="220" width="3" height="1" fill="#f58a3c" stroke="none"/><line x1="543.5" y1="214" x2="543.5" y2="220"/><line x1="543.5" y1="221" x2="543.5" y2="228"/><rect x="547.5" y="221.5" width="2" height="8" fill="none"/><line x1="548.5" y1="216" x2="548.5" y2="221"/><line x1="548.5" y1="230" x2="548.5" y2="231"/><rect x="551" y="229" width="3" height="2" fill="#f58a3c" stroke="none"/><line x1="552.5" y1="224" x2="552.5" y2="229"/><line x1="552.5" y1="231" x2="552.5" y2="239"/><rect x="555" y="228" width="3" height="2" fill="#f58a3c" stroke="none"/><line x1="556.5" y1="225" x2="556.5" y2="228"/><line x1="556.5" y1="230" x2="556.5" y2="231"/><rect x="559.5" y="227.5" width="2" height="2" fill="none"/><line x1="560.5" y1="223" x2="560.5" y2="227"/><line x1="560.5" y1="230" x2="560.5" y2="233"/><rect x="563" y="228" width="3" height="1" fill="#f58a3c" stroke="none"/><line x1="564.5" y1="224" x2="564.5" y2="228"/><line x1="564.5" y1="229" x2="564.5" y2="231"/><rect x="567.5" y="226.5" width="2" height="6" fill="none"/><line x1="568.5" y1="225" x2="568.5" y2="226"/><line x1="568.5" y1="233" x2="568.5" y2="234"/><rect x="571" y="207" width="3" height="27" fill="#f58a3c" stroke="none"/><line x1="572.5" y1="234" x2="572.5" y2="235"/><rect x="575" y="192" width="3" height="18" fill="#f58a3c" stroke="none"/><line x1="576.5" y1="187" x2="576.5" y2="192"/><line x1="576.5" y1="210" x2="576.5" y2="217"/><rect x="579" y="181" width="3" height="11" fill="#f58a3c" stroke="none"/><line x1="580.5" y1="178" x2="580.5" y2="181"/><rect x="583" y="180" width="3" height="1" fill="#f58a3c" stroke="none"/><line x1="584.5" y1="178" x2="584.5" y2="180"/><line x1="584.5" y1="181" x2="584.5" y2="185"/><rect x="588" y="180" width="3" height="1" fill="#f58a3c" stroke="none"/><line x1="589.5" y1="175" x2="589.5" y2="180"/><line x1="589.5" y1="181" x2="589.5" y2="184"/><rect x="592.5" y="182.5" width="2" height="11" fill="none"/><line x1="593.5" y1="177" x2="593.5" y2="182"/><line x1="593.5" y1="194" x2="593.5" y2="195"/><rect x="596.5" y="192.5" width="2" height="5" fill="none"/><line x1="597.5" y1="188" x2="597.5" y2="192"/><line x1="597.5" y1="198" x2="597.5" y2="203"/><rect x="600.5" y="198.5" width="2" height="4" fill="none"/><line x1="601.5" y1="190" x2="601.5" y2="198"/><line x1="601.5" y1="203" x2="601.5" y2="210"/><rect x="604.5" y="206.5" width="2" height="5" fill="none"/><line x1="605.5" y1="203" x2="605.5" y2="206"/><rect x="608" y="211" width="3" height="2" fill="#f58a3c" stroke="none"/><line x1="609.5" y1="207" x2="609.5" y2="211"/><line x1="609.5" y1="213" x2="609.5" y2="217"/><rect x="612" y="211" width="3" height="1" fill="#f58a3c" stroke="none"/><line x1="613.5" y1="209" x2="613.5" y2="211"/><line x1="613.5" y1="212" x2="613.5" y2="214"/><rect x="616" y="202" width="3" height="12" fill="#f58a3c" stroke="none"/><line x1="617.5" y1="195" x2="617.5" y2="202"/><line x1="617.5" y1="214" x2="617.5" y2="218"/><rect x="620" y="194" width="3" height="4" fill="#f58a3c" stroke="none"/><line x1="621.5" y1="184" x2="621.5" y2="194"/><line x1="621.5" y1="198" x2="621.5" y2="199"/><rect x="624" y="188" width="3" height="4" fill="#f58a3c" stroke="none"/><line x1="625.5" y1="184" x2="625.5" y2="188"/><line x1="625.5" y1="192" x2="625.5" y2="195"/><rect x="629.5" y="186.5" width="2" height="9" fill="none"/><line x1="630.5" y1="196" x2="630.5" y2="197"/><rect x="633" y="192" width="3" height="2" fill="#f58a3c" stroke="none"/><line x1="634.5" y1="188" x2="634.5" y2="192"/><line x1="634.5" y1="194" x2="634.5" y2="195"/><rect x="637" y="192" width="3" height="1" fill="#f58a3c" stroke="none"/><line x1="638.5" y1="188" x2="638.5" y2="192"/><line x1="638.5" y1="193" x2="638.5" y2="195"/><rect x="641.5" y="191.5" width="2" height="9" fill="none"/><line x1="642.5" y1="189" x2="642.5" y2="191"/><line x1="642.5" y1="201" x2="642.5" y2="205"/><rect x="645.5" y="201.5" width="2" height="8" fill="none"/><line x1="646.5" y1="199" x2="646.5" y2="201"/><line x1="646.5" y1="210" x2="646.5" y2="212"/><rect x="649" y="202" width="3" height="8" fill="#f58a3c" stroke="none"/><line x1="650.5" y1="193" x2="650.5" y2="202"/><rect x="653" y="195" width="3" height="2" fill="#f58a3c" stroke="none"/><line x1="654.5" y1="192" x2="654.5" y2="195"/><line x1="654.5" y1="197" x2="654.5" y2="199"/><rect x="657.5" y="194.5" width="2" height="3" fill="none"/><line x1="658.5" y1="190" x2="658.5" y2="194"/><line x1="658.5" y1="198" x2="658.5" y2="199"/><rect x="661" y="196" width="3" height="2" fill="#f58a3c" stroke="none"/><line x1="662.5" y1="193" x2="662.5" y2="196"/><line x1="662.5" y1="198" x2="662.5" y2="201"/><rect x="665.5" y="196.5" width="2" height="8" fill="none"/><line x1="666.5" y1="191" x2="666.5" y2="196"/><line x1="666.5" y1="205" x2="666.5" y2="206"/><rect x="669" y="201" width="3" height="2" fill="#f58a3c" stroke="none"/><line x1="670.5" y1="198" x2="670.5" y2="201"/><line x1="670.5" y1="203" x2="670.5" y2="210"/><rect x="674" y="202" width="3" height="2" fill="#f58a3c" stroke="none"/><line x1="675.5" y1="204" x2="675.5" y2="210"/><rect x="678.5" y="203.5" width="2" height="7" fill="none"/><line x1="679.5" y1="202" x2="679.5" y2="203"/><line x1="679.5" y1="211" x2="679.5" y2="213"/><rect x="682" y="209" width="3" height="1" fill="#f58a3c" stroke="none"/><line x1="683.5" y1="206" x2="683.5" y2="209"/><line x1="683.5" y1="210" x2="683.5" y2="212"/><rect x="686" y="206" width="3" height="2" fill="#f58a3c" stroke="none"/><line x1="687.5" y1="203" x2="687.5" y2="206"/><line x1="687.5" y1="208" x2="687.5" y2="210"/><rect x="690" y="202" width="3" height="2" fill="#f58a3c" stroke="none"/><line x1="691.5" y1="196" x2="691.5" y2="202"/><line x1="691.5" y1="204" x2="691.5" y2="206"/><rect x="694" y="198" width="3" height="2" fill="#f58a3c" stroke="none"/><line x1="695.5" y1="192" x2="695.5" y2="198"/><line x1="695.5" y1="200" x2="695.5" y2="209"/><rect x="698.5" y="196.5" width="2" height="14" fill="none"/><line x1="699.5" y1="194" x2="699.5" y2="196"/><line x1="699.5" y1="211" x2="699.5" y2="212"/><rect x="702" y="209" width="3" height="1" fill="#f58a3c" stroke="none"/><line x1="703.5" y1="205" x2="703.5" y2="209"/><line x1="703.5" y1="210" x2="703.5" y2="212"/><rect x="706" y="208" width="3" height="2" fill="#f58a3c" stroke="none"/><line x1="707.5" y1="205" x2="707.5" y2="208"/><line x1="707.5" y1="210" x2="707.5" y2="212"/><rect x="710" y="209" width="3" height="1" fill="#f58a3c" stroke="none"/><line x1="711.5" y1="206" x2="711.5" y2="209"/><line x1="711.5" y1="210" x2="711.5" y2="212"/><rect x="715" y="210" width="3" height="1" fill="#f58a3c" stroke="none"/><line x1="716.5" y1="202" x2="716.5" y2="210"/><line x1="716.5" y1="211" x2="716.5" y2="214"/><rect x="719" y="208" width="3" height="2" fill="#f58a3c" stroke="none"/><line x1="720.5" y1="193" x2="720.5" y2="208"/><line x1="720.5" y1="210" x2="720.5" y2="213"/><rect x="723" y="203" width="3" height="1" fill="#f58a3c" stroke="none"/><line x1="724.5" y1="190" x2="724.5" y2="203"/><line x1="724.5" y1="204" x2="724.5" y2="228"/><rect x="727" y="203" width="3" height="2" fill="#f58a3c" stroke="none"/><line x1="728.5" y1="200" x2="728.5" y2="203"/><line x1="728.5" y1="205" x2="728.5" y2="209"/><rect x="731" y="203" width="3" height="1" fill="#f58a3c" stroke="none"/><line x1="732.5" y1="200" x2="732.5" y2="203"/><line x1="732.5" y1="204" x2="732.5" y2="209"/><rect x="735.5" y="204.5" width="2" height="13" fill="none"/><line x1="736.5" y1="201" x2="736.5" y2="204"/><line x1="736.5" y1="218" x2="736.5" y2="219"/><rect x="739.5" y="217.5" width="2" height="12" fill="none"/><line x1="740.5" y1="214" x2="740.5" y2="217"/><line x1="740.5" y1="230" x2="740.5" y2="232"/><rect x="743" y="221" width="3" height="8" fill="#f58a3c" stroke="none"/><line x1="744.5" y1="217" x2="744.5" y2="221"/><line x1="744.5" y1="229" x2="744.5" y2="233"/><rect x="747" y="220" width="3" height="2" fill="#f58a3c" stroke="none"/><line x1="748.5" y1="214" x2="748.5" y2="220"/><line x1="748.5" y1="222" x2="748.5" y2="230"/><rect x="751.5" y="222.5" width="2" height="3" fill="none"/><line x1="752.5" y1="218" x2="752.5" y2="222"/><line x1="752.5" y1="226" x2="752.5" y2="227"/><rect x="755" y="225" width="3" height="2" fill="#f58a3c" stroke="none"/><line x1="756.5" y1="224" x2="756.5" y2="225"/><line x1="756.5" y1="227" x2="756.5" y2="232"/><rect x="760" y="225" width="3" height="1" fill="#f58a3c" stroke="none"/><line x1="761.5" y1="221" x2="761.5" y2="225"/><line x1="761.5" y1="226" x2="761.5" y2="228"/><rect x="764.5" y="224.5" width="2" height="5" fill="none"/><line x1="765.5" y1="222" x2="765.5" y2="224"/><rect x="768" y="229" width="3" height="1" fill="#f58a3c" stroke="none"/><line x1="769.5" y1="219" x2="769.5" y2="229"/><line x1="769.5" y1="230" x2="769.5" y2="234"/><rect x="772" y="228" width="3" height="2" fill="#f58a3c" stroke="none"/><line x1="773.5" y1="230" x2="773.5" y2="243"/><rect x="776" y="227" width="3" height="2" fill="#f58a3c" stroke="none"/><line x1="777.5" y1="224" x2="777.5" y2="227"/><line x1="777.5" y1="229" x2="777.5" y2="233"/><rect x="780" y="227" width="3" height="1" fill="#f58a3c" stroke="none"/><line x1="781.5" y1="223" x2="781.5" y2="227"/><line x1="781.5" y1="228" x2="781.5" y2="232"/><rect x="784.5" y="225.5" width="2" height="11" fill="none"/><line x1="785.5" y1="237" x2="785.5" y2="241"/><rect x="788" y="232" width="3" height="4" fill="#f58a3c" stroke="none"/><line x1="789.5" y1="228" x2="789.5" y2="232"/><line x1="789.5" y1="236" x2="789.5" y2="243"/><rect x="792" y="216" width="3" height="15" fill="#f58a3c" stroke="none"/><line x1="793.5" y1="209" x2="793.5" y2="216"/><line x1="793.5" y1="231" x2="793.5" y2="232"/><rect x="796" y="208" width="3" height="4" fill="#f58a3c" stroke="none"/><line x1="797.5" y1="200" x2="797.5" y2="208"/><line x1="797.5" y1="212" x2="797.5" y2="219"/><rect x="801" y="205" width="3" height="3" fill="#f58a3c" stroke="none"/><line x1="802.5" y1="200" x2="802.5" y2="205"/><line x1="802.5" y1="208" x2="802.5" y2="209"/><rect x="805" y="200" width="3" height="4" fill="#f58a3c" stroke="none"/><line x1="806.5" y1="196" x2="806.5" y2="200"/><line x1="806.5" y1="204" x2="806.5" y2="208"/><rect x="809" y="197" width="3" height="3" fill="#f58a3c" stroke="none"/><line x1="810.5" y1="191" x2="810.5" y2="197"/><line x1="810.5" y1="200" x2="810.5" y2="201"/><rect x="813" y="191" width="3" height="6" fill="#f58a3c" stroke="none"/><line x1="814.5" y1="185" x2="814.5" y2="191"/><line x1="814.5" y1="197" x2="814.5" y2="199"/><rect x="817.5" y="191.5" width="2" height="6" fill="none"/><line x1="818.5" y1="188" x2="818.5" y2="191"/><line x1="818.5" y1="198" x2="818.5" y2="201"/><rect x="821" y="191" width="3" height="1" fill="#f58a3c" stroke="none"/><line x1="822.5" y1="187" x2="822.5" y2="191"/><line x1="822.5" y1="192" x2="822.5" y2="199"/><rect x="825.5" y="194.5" width="2" height="6" fill="none"/><line x1="826.5" y1="187" x2="826.5" y2="194"/><rect x="829" y="191" width="3" height="7" fill="#f58a3c" stroke="none"/><line x1="830.5" y1="190" x2="830.5" y2="191"/><line x1="830.5" y1="198" x2="830.5" y2="200"/><rect x="833" y="190" width="3" height="4" fill="#f58a3c" stroke="none"/><line x1="834.5" y1="188" x2="834.5" y2="190"/><line x1="834.5" y1="194" x2="834.5" y2="196"/><rect x="837.5" y="190.5" width="2" height="6" fill="none"/><line x1="838.5" y1="183" x2="838.5" y2="190"/><line x1="838.5" y1="197" x2="838.5" y2="198"/><rect x="842" y="196" width="3" height="2" fill="#f58a3c" stroke="none"/><line x1="843.5" y1="187" x2="843.5" y2="196"/><line x1="843.5" y1="198" x2="843.5" y2="202"/><rect x="846.5" y="198.5" width="2" height="4" fill="none"/><line x1="847.5" y1="194" x2="847.5" y2="198"/><line x1="847.5" y1="203" x2="847.5" y2="208"/><rect x="850.5" y="200.5" width="2" height="2" fill="none"/><line x1="851.5" y1="197" x2="851.5" y2="200"/><rect x="854" y="202" width="3" height="1" fill="#f58a3c" stroke="none"/><line x1="855.5" y1="199" x2="855.5" y2="202"/><line x1="855.5" y1="203" x2="855.5" y2="204"/><rect x="858" y="202" width="3" height="1" fill="#f58a3c" stroke="none"/><line x1="859.5" y1="199" x2="859.5" y2="202"/><line x1="859.5" y1="203" x2="859.5" y2="204"/><rect x="862" y="199" width="3" height="4" fill="#f58a3c" stroke="none"/><line x1="863.5" y1="193" x2="863.5" y2="199"/><line x1="863.5" y1="203" x2="863.5" y2="205"/></g>
<polyline points="16.5,68.6 21.4,69.3 37.5,71.1 56.0,73.0 68.3,76.7 83.0,81.6 100.4,87.8 116.5,93.3 120.0,94.9 128.3,99.0 147.8,109.4 167.2,117.1 192.2,127.5 217.2,137.9 239.4,148.3 251.9,154.6 264.4,158.8 282.0,158.9 306.0,161.7 339.0,173.7 350.0,175.6 387.0,180.2 450.0,180.2 470.0,184.0 498.0,188.5 520.0,190.4 530.0,193.0 553.0,199.6 570.0,203.3 575.5,201.5 594.0,200.5 700.0,201.7 733.0,204.0 757.0,206.4 776.4,210.7 785.0,211.8 808.3,210.7 819.9,210.0 827.6,208.8 836.9,207.2 863.1,206.9" fill="none" stroke="#b82226" stroke-width="1.5" stroke-linejoin="round"/>
<polyline points="16.5,70.5 21.4,71.7 31.3,74.2 43.6,75.4 54.7,77.3 61.0,80.4 69.6,86.5 83.0,92.7 100.4,102.6 116.5,114.3 120.0,116.4 132.5,122.6 143.6,133.0 164.4,142.8 172.8,144.2 186.7,152.5 206.1,160.8 222.8,170.0 235.5,176.5 252.0,187.6 261.5,187.6 276.0,181.0 298.5,176.5 309.6,179.0 328.0,190.0 350.0,195.0 368.5,196.0 387.0,194.0 413.0,186.7 429.6,186.7 440.7,182.0 450.0,182.0 470.0,189.4 490.7,193.0 513.0,197.8 530.0,201.5 538.5,206.0 557.0,213.5 570.0,217.0 581.0,208.9 594.0,204.0 599.6,204.0 609.0,206.0 616.0,206.0 623.7,202.4 634.8,201.5 700.0,201.7 733.0,205.3 759.0,212.9 783.0,219.4 791.5,222.6 806.0,216.9 813.0,214.6 823.7,210.7 829.0,207.2 836.9,204.9 861.6,204.9" fill="none" stroke="#1a1ab8" stroke-width="1.3" stroke-linejoin="round"/>
<line x1="17" y1="199.5" x2="899" y2="199.5" stroke="#dcdcdc" stroke-width="1"/>
<g fill="#b02222"><rect x="18" y="271" width="2" height="6"/><rect x="22" y="271" width="2" height="7"/><rect x="26" y="271" width="2" height="6"/><rect x="30" y="271" width="2" height="6"/><rect x="35" y="271" width="2" height="5"/><rect x="40" y="271" width="2" height="4"/><rect x="44" y="271" width="2" height="5"/><rect x="48" y="271" width="2" height="4"/><rect x="51" y="271" width="2" height="3"/><rect x="56" y="271" width="2" height="3"/><rect x="60" y="271" width="2" height="6"/><rect x="63" y="271" width="2" height="7"/><rect x="67" y="271" width="2" height="7"/><rect x="71" y="271" width="2" height="7"/><rect x="75" y="271" width="2" height="6"/><rect x="80" y="271" width="2" height="6"/><rect x="84" y="271" width="2" height="6"/><rect x="88" y="271" width="2" height="6"/><rect x="92" y="271" width="2" height="6"/><rect x="96" y="271" width="2" height="6"/><rect x="100" y="271" width="2" height="6"/><rect x="104" y="271" width="2" height="5"/><rect x="109" y="271" width="2" height="5"/><rect x="112" y="271" width="2" height="5"/><rect x="116" y="271" width="2" height="6"/><rect x="120" y="271" width="2" height="4"/><rect x="125" y="271" width="2" height="4"/><rect x="129" y="271" width="2" height="2"/><rect x="134" y="271" width="2" height="4"/><rect x="138" y="271" width="2" height="4"/><rect x="142" y="271" width="2" height="5"/><rect x="146" y="271" width="2" height="6"/><rect x="150" y="271" width="2" height="4"/><rect x="154" y="271" width="2" height="1"/><rect x="158" y="271" width="2" height="1"/><rect x="161" y="270" width="2" height="1"/><rect x="166" y="269" width="2" height="2"/><rect x="170" y="268" width="2" height="3"/><rect x="174" y="269" width="2" height="2"/><rect x="178" y="270" width="2" height="1"/><rect x="182" y="270" width="2" height="1"/><rect x="186" y="270" width="2" height="1"/><rect x="190" y="271" width="2" height="1"/><rect x="194" y="271" width="2" height="1"/><rect x="198" y="271" width="2" height="1"/><rect x="202" y="271" width="2" height="1"/><rect x="207" y="271" width="2" height="1"/><rect x="212" y="271" width="2" height="1"/><rect x="216" y="271" width="2" height="1"/><rect x="220" y="271" width="2" height="1"/><rect x="224" y="271" width="2" height="1"/><rect x="228" y="271" width="2" height="1"/><rect x="232" y="271" width="2" height="2"/><rect x="235" y="271" width="2" height="2"/><rect x="240" y="271" width="2" height="3"/><rect x="244" y="271" width="2" height="3"/><rect x="248" y="271" width="2" height="3"/><rect x="252" y="271" width="2" height="3"/><rect x="256" y="271" width="2" height="1"/><rect x="260" y="266" width="2" height="5"/><rect x="264" y="264" width="2" height="7"/><rect x="268" y="261" width="2" height="10"/><rect x="272" y="260" width="2" height="11"/><rect x="276" y="256" width="2" height="15"/><rect x="280" y="256" width="2" height="15"/><rect x="284" y="258" width="2" height="13"/><rect x="288" y="259" width="2" height="12"/><rect x="293" y="260" width="2" height="11"/><rect x="298" y="264" width="2" height="7"/><rect x="302" y="266" width="2" height="5"/><rect x="306" y="268" width="2" height="3"/><rect x="309" y="270" width="2" height="1"/><rect x="313" y="271" width="2" height="1"/><rect x="317" y="271" width="2" height="2"/><rect x="321" y="271" width="2" height="5"/><rect x="325" y="271" width="2" height="8"/><rect x="330" y="271" width="2" height="10"/><rect x="334" y="271" width="2" height="8"/><rect x="338" y="271" width="2" height="8"/><rect x="342" y="271" width="2" height="7"/><rect x="346" y="271" width="2" height="6"/><rect x="350" y="271" width="2" height="4"/><rect x="354" y="271" width="2" height="1"/><rect x="358" y="271" width="2" height="1"/><rect x="362" y="270" width="2" height="1"/><rect x="366" y="270" width="2" height="1"/><rect x="370" y="268" width="2" height="3"/><rect x="374" y="266" width="2" height="5"/><rect x="379" y="265" width="2" height="6"/><rect x="384" y="265" width="2" height="6"/><rect x="387" y="265" width="2" height="6"/><rect x="392" y="264" width="2" height="7"/><rect x="395" y="264" width="2" height="7"/><rect x="400" y="264" width="2" height="7"/><rect x="404" y="264" width="2" height="7"/><rect x="408" y="265" width="2" height="6"/><rect x="412" y="266" width="2" height="5"/><rect x="416" y="268" width="2" height="3"/><rect x="420" y="268" width="2" height="3"/><rect x="424" y="270" width="2" height="1"/><rect x="428" y="270" width="2" height="1"/><rect x="432" y="271" width="2" height="1"/><rect x="436" y="270" width="2" height="1"/><rect x="440" y="268" width="2" height="3"/><rect x="445" y="269" width="2" height="2"/><rect x="449" y="271" width="2" height="1"/><rect x="452" y="271" width="2" height="4"/><rect x="456" y="271" width="2" height="4"/><rect x="462" y="271" width="2" height="4"/><rect x="466" y="271" width="2" height="5"/><rect x="470" y="271" width="2" height="6"/><rect x="474" y="271" width="2" height="6"/><rect x="477" y="271" width="2" height="5"/><rect x="482" y="271" width="2" height="5"/><rect x="486" y="271" width="2" height="5"/><rect x="489" y="271" width="2" height="4"/><rect x="494" y="271" width="2" height="4"/><rect x="498" y="271" width="2" height="4"/><rect x="502" y="271" width="2" height="3"/><rect x="506" y="271" width="2" height="3"/><rect x="510" y="271" width="2" height="3"/><rect x="514" y="271" width="2" height="3"/><rect x="518" y="271" width="2" height="3"/><rect x="522" y="271" width="2" height="2"/><rect x="526" y="271" width="2" height="4"/><rect x="530" y="271" width="2" height="4"/><rect x="534" y="271" width="2" height="4"/><rect x="538" y="271" width="2" height="4"/><rect x="542" y="271" width="2" height="4"/><rect x="548" y="271" width="2" height="5"/><rect x="552" y="271" width="2" height="5"/><rect x="555" y="271" width="2" height="4"/><rect x="559" y="271" width="2" height="4"/><rect x="564" y="271" width="2" height="3"/><rect x="568" y="271" width="2" height="2"/><rect x="572" y="270" width="2" height="1"/><rect x="575" y="267" width="2" height="4"/><rect x="579" y="261" width="2" height="10"/><rect x="583" y="258" width="2" height="13"/><rect x="588" y="258" width="2" height="13"/><rect x="592" y="260" width="2" height="11"/><rect x="596" y="261" width="2" height="10"/><rect x="600" y="266" width="2" height="5"/><rect x="604" y="269" width="2" height="2"/><rect x="608" y="270" width="2" height="1"/><rect x="612" y="271" width="2" height="1"/><rect x="616" y="271" width="2" height="1"/><rect x="620" y="271" width="2" height="1"/><rect x="624" y="271" width="2" height="1"/><rect x="629" y="269" width="2" height="2"/><rect x="634" y="269" width="2" height="2"/><rect x="638" y="270" width="2" height="1"/><rect x="642" y="271" width="2" height="1"/><rect x="646" y="271" width="2" height="2"/><rect x="650" y="271" width="2" height="1"/><rect x="654" y="271" width="2" height="1"/><rect x="658" y="271" width="2" height="1"/><rect x="662" y="271" width="2" height="1"/><rect x="666" y="271" width="2" height="2"/><rect x="670" y="271" width="2" height="2"/><rect x="674" y="271" width="2" height="2"/><rect x="678" y="271" width="2" height="3"/><rect x="682" y="271" width="2" height="4"/><rect x="686" y="271" width="2" height="3"/><rect x="690" y="271" width="2" height="2"/><rect x="694" y="271" width="2" height="2"/><rect x="698" y="271" width="2" height="2"/><rect x="702" y="271" width="2" height="2"/><rect x="706" y="271" width="2" height="2"/><rect x="710" y="271" width="2" height="2"/><rect x="715" y="271" width="2" height="3"/><rect x="720" y="271" width="2" height="3"/><rect x="724" y="271" width="2" height="1"/><rect x="728" y="271" width="2" height="1"/><rect x="732" y="271" width="2" height="1"/><rect x="735" y="271" width="2" height="3"/><rect x="739" y="271" width="2" height="5"/><rect x="744" y="271" width="2" height="5"/><rect x="748" y="271" width="2" height="4"/><rect x="752" y="271" width="2" height="4"/><rect x="756" y="271" width="2" height="4"/><rect x="760" y="271" width="2" height="4"/><rect x="765" y="271" width="2" height="4"/><rect x="768" y="271" width="2" height="4"/><rect x="773" y="271" width="2" height="3"/><rect x="776" y="271" width="2" height="3"/><rect x="780" y="271" width="2" height="3"/><rect x="785" y="271" width="2" height="3"/><rect x="789" y="271" width="2" height="3"/><rect x="793" y="271" width="2" height="1"/><rect x="797" y="270" width="2" height="1"/><rect x="801" y="267" width="2" height="4"/><rect x="806" y="264" width="2" height="7"/><rect x="810" y="265" width="2" height="6"/><rect x="814" y="263" width="2" height="8"/><rect x="817" y="263" width="2" height="8"/><rect x="821" y="265" width="2" height="6"/><rect x="825" y="265" width="2" height="6"/><rect x="830" y="265" width="2" height="6"/><rect x="834" y="265" width="2" height="6"/><rect x="838" y="268" width="2" height="3"/><rect x="842" y="269" width="2" height="2"/><rect x="846" y="270" width="2" height="1"/><rect x="850" y="271" width="2" height="1"/><rect x="854" y="271" width="2" height="1"/><rect x="858" y="271" width="2" height="1"/><rect x="862" y="271" width="2" height="1"/></g>
<polyline points="17.0,272.8 21.0,275.6 25.8,278.4 37.6,279.0 39.0,280.5 55.7,281.2 59.1,284.0 68.2,291.6 79.0,295.0 92.0,300.0 118.0,308.6 137.7,309.0 145.5,315.0 150.0,313.9 156.2,311.9 167.7,308.2 175.0,304.6 183.3,306.6 191.7,305.0 202.0,302.5 214.6,306.6 223.0,305.0 238.5,308.2 245.8,311.3 255.2,310.3 260.4,302.0 270.0,289.5 277.0,276.0 290.0,269.5 300.0,270.8 308.3,273.0 314.6,275.7 320.8,278.1 327.8,287.9 332.0,290.6 338.9,292.4 347.2,292.7 352.8,290.6 362.5,287.2 369.4,282.3 380.0,277.4 388.4,274.9 398.8,269.4 409.2,264.8 419.7,264.8 428.0,266.9 437.0,263.1 442.6,260.7 447.4,261.7 454.4,268.0 463.0,272.8 472.0,278.4 485.2,282.6 517.1,283.2 525.4,285.3 536.0,289.5 548.0,290.9 572.0,289.5 582.6,270.8 593.0,262.4 603.4,265.9 614.0,270.0 619.0,268.7 625.9,264.8 632.8,264.5 638.4,262.4 645.3,265.2 660.6,267.0 673.1,268.7 681.4,270.8 692.0,272.8 699.0,274.2 710.8,276.6 721.2,277.0 731.7,274.9 737.2,276.6 742.0,280.5 752.5,284.0 762.9,286.7 770.0,288.8 778.4,288.5 784.5,289.3 793.2,288.5 806.2,272.8 816.6,263.3 827.0,260.2 832.2,256.3 839.2,256.3 846.1,258.9 854.8,260.7 859.1,262.9 863.5,262.9" fill="none" stroke="#1a801a" stroke-width="1.2" stroke-linejoin="round"/>
<polyline points="17.0,266.6 24.4,269.4 34.8,273.5 45.2,276.0 55.7,278.7 68.2,283.6 76.5,286.7 86.9,289.5 94.0,291.6 118.0,303.4 139.0,307.3 150.0,310.8 166.7,310.8 171.9,308.7 183.3,308.7 189.6,306.6 200.0,306.6 204.2,304.6 217.7,305.0 223.0,306.6 227.0,304.6 234.4,305.0 238.5,306.6 246.9,308.7 256.2,308.7 264.6,304.6 270.0,301.4 287.4,283.9 300.0,278.8 302.8,276.8 313.9,276.8 322.9,277.4 329.2,280.2 337.5,284.4 348.6,288.6 362.5,288.9 369.4,286.5 380.0,282.0 385.0,282.6 398.8,275.6 411.3,270.0 419.7,269.0 430.0,268.3 439.0,265.2 454.4,265.2 463.0,266.9 473.4,271.4 487.2,278.4 501.0,280.5 517.1,281.9 528.9,283.9 536.0,285.3 548.0,286.7 565.0,290.9 572.0,290.5 582.6,284.0 593.0,276.3 600.0,272.8 605.5,270.8 614.0,270.8 625.9,268.7 632.8,266.6 673.1,266.6 674.5,268.7 685.6,268.7 687.0,270.8 701.8,271.1 703.9,272.8 714.3,274.9 737.2,274.9 745.6,277.0 756.0,280.5 762.9,282.9 770.0,285.0 783.6,285.0 785.4,286.7 794.0,286.3 807.0,279.8 820.0,272.0 828.8,266.8 837.4,262.9 846.1,260.7 854.8,260.2 859.1,262.0 863.5,262.9" fill="none" stroke="#cc2424" stroke-width="1.5" stroke-linejoin="round"/>
<defs><linearGradient id="rg" gradientUnits="userSpaceOnUse" x1="0" y1="327" x2="0" y2="379"><stop offset="0" stop-color="#6a3400" stop-opacity="0.62"/><stop offset="0.45" stop-color="#6a3400" stop-opacity="0.3"/><stop offset="1" stop-color="#6a3400" stop-opacity="0.1"/></linearGradient></defs>
<polygon points="17.0,378.5 17.0,364.5 19.2,362.4 23.4,366.6 27.5,363.4 31.7,363.4 34.8,361.4 40.6,365.5 44.2,364.5 48.4,361.4 52.5,365.0 55.7,366.9 57.2,371.2 58.8,375.4 62.0,378.5 66.0,378.5 70.0,378.0 73.0,376.0 76.5,371.2 79.0,374.9 82.0,378.5 86.9,378.5 93.2,378.5 97.3,378.5 101.5,378.5 105.1,378.5 109.3,378.5 114.0,378.5 117.6,378.5 126.5,378.5 131.7,378.5 134.0,378.5 146.5,378.5 149.6,378.5 154.3,371.2 159.0,375.4 162.1,376.5 167.3,376.5 171.5,368.1 174.6,371.2 178.8,378.5 183.0,378.5 187.1,373.3 191.3,372.3 195.5,373.3 199.1,378.5 203.3,368.1 208.0,376.5 211.6,378.5 216.3,378.5 220.5,377.0 224.1,370.2 229.8,375.4 233.0,378.5 237.1,378.5 240.8,378.5 244.4,378.5 247.4,378.5 249.3,378.5 254.8,366.6 257.6,359.2 262.2,352.7 265.0,351.3 267.8,351.3 269.6,353.2 274.3,345.3 277.5,336.5 280.7,342.5 285.4,348.5 289.1,346.2 293.7,349.0 297.9,355.0 303.0,354.6 309.4,362.0 315.0,362.4 319.6,367.5 326.1,376.8 330.3,376.3 335.2,370.4 339.4,370.9 347.2,370.4 351.4,362.5 355.0,361.0 359.2,363.6 363.3,359.4 366.5,353.7 371.1,349.5 375.8,352.1 380.5,344.3 384.2,352.1 388.3,352.6 392.5,350.0 395.6,343.3 400.3,338.6 404.5,347.4 412.3,341.7 415.9,348.0 421.7,351.6 425.3,360.5 429.0,347.4 435.2,342.2 441.6,336.5 449.4,360.5 452.5,361.5 457.2,359.4 461.9,361.5 466.0,360.5 470.2,366.2 476.5,363.6 481.7,364.6 485.8,363.0 496.2,363.0 502.5,366.2 507.7,362.5 515.0,365.1 519.2,369.8 522.8,368.3 527.0,376.1 531.1,372.4 535.3,376.6 542.1,376.6 545.0,378.5 551.7,378.5 556.5,377.4 560.3,378.3 564.1,375.5 568.0,378.3 571.8,350.6 575.6,337.3 581.3,330.6 587.0,331.5 590.9,335.4 594.7,344.0 599.5,348.7 604.2,355.4 610.0,360.2 613.8,360.2 617.6,348.7 625.3,341.1 631.0,347.8 634.8,345.9 638.6,345.9 646.3,359.2 651.0,349.7 655.8,348.7 662.0,350.2 666.3,355.6 670.6,353.5 673.9,354.6 679.3,361.0 684.7,357.8 695.6,349.1 699.9,361.0 705.3,358.9 716.2,360.0 724.9,350.2 728.1,353.5 732.5,352.4 740.0,374.1 745.5,364.3 752.0,368.7 756.3,367.6 760.7,366.5 765.0,370.8 773.7,370.8 776.5,367.0 780.2,364.3 782.0,365.7 785.3,373.5 789.4,365.2 792.2,355.5 795.0,347.1 797.8,343.4 802.4,341.1 806.1,337.0 810.7,337.9 814.4,332.8 818.1,338.8 821.9,338.4 826.5,342.5 830.2,337.0 833.9,335.6 837.6,342.5 843.1,345.8 850.6,351.3 858.9,351.3 862.6,347.1 862.7,378.5" fill="url(#rg)"/>
<line x1="34" y1="327" x2="863" y2="327" stroke="#1e1ea8" stroke-width="2"/>
<line x1="17" y1="379" x2="863" y2="379" stroke="#1e1ea8" stroke-width="2"/>
<polyline points="17.0,364.5 19.2,362.4 23.4,366.6 27.5,363.4 31.7,363.4 34.8,361.4 40.6,365.5 44.2,364.5 48.4,361.4 52.5,365.0 55.7,366.9" fill="none" stroke="#f08a2c" stroke-width="1.1" stroke-linejoin="round"/>
<polyline points="55.7,366.9 57.2,371.2 58.8,375.4 62.0,379.0 66.0,381.0 70.0,378.0 73.0,376.0 76.5,371.2 79.0,374.9 82.0,379.0 86.9,382.7 93.2,382.7 97.3,385.3 101.5,385.3 105.1,382.7 109.3,390.5 114.0,386.4 117.6,389.5 126.5,380.1 131.7,384.3 134.0,386.4 146.5,395.2" fill="none" stroke="#2ad02a" stroke-width="1.1" stroke-linejoin="round"/>
<polyline points="146.5,395.2 149.6,380.6 154.3,371.2 159.0,375.4 162.1,376.5 167.3,376.5 171.5,368.1 174.6,371.2" fill="none" stroke="#f08a2c" stroke-width="1.1" stroke-linejoin="round"/>
<polyline points="174.6,371.2 178.8,379.1" fill="none" stroke="#2ad02a" stroke-width="1.1" stroke-linejoin="round"/>
<polyline points="178.8,379.1 183.0,378.5 187.1,373.3 191.3,372.3 195.5,373.3 199.1,378.5 203.3,368.1 208.0,376.5" fill="none" stroke="#f08a2c" stroke-width="1.1" stroke-linejoin="round"/>
<polyline points="208.0,376.5 211.6,378.8" fill="none" stroke="#2ad02a" stroke-width="1.1" stroke-linejoin="round"/>
<polyline points="211.6,378.8 216.3,378.5 220.5,377.0 224.1,370.2 229.8,375.4 233.0,378.5" fill="none" stroke="#f08a2c" stroke-width="1.1" stroke-linejoin="round"/>
<polyline points="233.0,378.5 237.1,382.2 240.8,383.8 244.4,386.4 247.4,382.3 249.3,379.1" fill="none" stroke="#2ad02a" stroke-width="1.1" stroke-linejoin="round"/>
<polyline points="249.3,379.1 254.8,366.6 257.6,359.2 262.2,352.7 265.0,351.3 267.8,351.3 269.6,353.2 274.3,345.3 277.5,336.5 280.7,342.5 285.4,348.5 289.1,346.2 293.7,349.0 297.9,355.0 303.0,354.6 309.4,362.0 315.0,362.4 319.6,367.5 326.1,376.8 330.3,376.3 335.2,370.4 339.4,370.9 347.2,370.4 351.4,362.5 355.0,361.0 359.2,363.6 363.3,359.4 366.5,353.7 371.1,349.5 375.8,352.1 380.5,344.3 384.2,352.1 388.3,352.6 392.5,350.0 395.6,343.3 400.3,338.6 404.5,347.4 412.3,341.7 415.9,348.0 421.7,351.6 425.3,360.5 429.0,347.4 435.2,342.2 441.6,336.5 449.4,360.5 452.5,361.5 457.2,359.4 461.9,361.5 466.0,360.5 470.2,366.2 476.5,363.6 481.7,364.6 485.8,363.0 496.2,363.0 502.5,366.2 507.7,362.5 515.0,365.1 519.2,369.8 522.8,368.3 527.0,376.1 531.1,372.4 535.3,376.6 542.1,376.6" fill="none" stroke="#f08a2c" stroke-width="1.1" stroke-linejoin="round"/>
<polyline points="542.1,376.6 545.0,381.2 551.7,384.6 556.5,377.4" fill="none" stroke="#2ad02a" stroke-width="1.1" stroke-linejoin="round"/>
<polyline points="556.5,377.4 560.3,378.3 564.1,375.5" fill="none" stroke="#f08a2c" stroke-width="1.1" stroke-linejoin="round"/>
<polyline points="564.1,375.5 568.0,378.3" fill="none" stroke="#2ad02a" stroke-width="1.1" stroke-linejoin="round"/>
<polyline points="568.0,378.3 571.8,350.6 575.6,337.3 581.3,330.6 587.0,331.5 590.9,335.4 594.7,344.0 599.5,348.7 604.2,355.4 610.0,360.2 613.8,360.2 617.6,348.7 625.3,341.1 631.0,347.8 634.8,345.9 638.6,345.9 646.3,359.2 651.0,349.7 655.8,348.7 662.0,350.2 666.3,355.6 670.6,353.5 673.9,354.6 679.3,361.0 684.7,357.8 695.6,349.1 699.9,361.0 705.3,358.9 716.2,360.0 724.9,350.2 728.1,353.5 732.5,352.4 740.0,374.1 745.5,364.3 752.0,368.7 756.3,367.6 760.7,366.5 765.0,370.8 773.7,370.8 776.5,367.0 780.2,364.3 782.0,365.7 785.3,373.5 789.4,365.2 792.2,355.5 795.0,347.1 797.8,343.4 802.4,341.1 806.1,337.0 810.7,337.9 814.4,332.8 818.1,338.8 821.9,338.4 826.5,342.5 830.2,337.0 833.9,335.6 837.6,342.5 843.1,345.8 850.6,351.3 858.9,351.3 862.6,347.1" fill="none" stroke="#f08a2c" stroke-width="1.1" stroke-linejoin="round"/>
<rect x="17" y="37" width="276" height="13" fill="#39414a"/>
<text x="18" y="48" style="font-family:'Liberation Sans',sans-serif;font-size:10px" textLength="134" lengthAdjust="spacingAndGlyphs" fill="#1818e8">Exponential_Moving_Average</text>
<text x="156.3" y="48" style="font-family:'Liberation Sans',sans-serif;font-size:10px" textLength="134" lengthAdjust="spacingAndGlyphs" fill="#e8242a">Exponential_Moving_Average</text>
<text x="18.3" y="265" style="font-family:'Liberation Sans',sans-serif;font-size:11px" textLength="28" lengthAdjust="spacingAndGlyphs" fill="#1f8a2a">MACD</text>
<text x="18" y="336.3" style="font-family:'Liberation Sans',sans-serif;font-size:11px" textLength="15" lengthAdjust="spacingAndGlyphs" fill="#f08a2c">RSI</text>
<rect x="16" y="36" width="31" height="22" fill="#f0f0f0"/>
<rect x="16" y="36" width="31" height="5" fill="#d4d4d4"/>
<defs><linearGradient id="gr" x1="0" y1="0" x2="0" y2="1"><stop offset="0" stop-color="#f04848"/><stop offset="1" stop-color="#c01818"/></linearGradient><linearGradient id="gb" x1="0" y1="0" x2="0" y2="1"><stop offset="0" stop-color="#40b8e8"/><stop offset="1" stop-color="#1878b8"/></linearGradient></defs>
<rect x="20.5" y="44.5" width="9" height="9" rx="1.5" fill="url(#gr)" stroke="#a01010" stroke-width="1"/>
<rect x="33.5" y="44.5" width="9" height="9" rx="1.5" fill="url(#gb)" stroke="#10609a" stroke-width="1"/>
<text x="906.5" y="45.5" style="font-family:'Liberation Sans',sans-serif;font-size:11px;letter-spacing:-0.3px" fill="#ffffff" stroke="#ffffff" stroke-width="0.35">0.9500</text>
<text x="906.5" y="85.5" style="font-family:'Liberation Sans',sans-serif;font-size:11px;letter-spacing:-0.3px" fill="#ffffff" stroke="#ffffff" stroke-width="0.35">0.9400</text>
<text x="906.5" y="126.5" style="font-family:'Liberation Sans',sans-serif;font-size:11px;letter-spacing:-0.3px" fill="#ffffff" stroke="#ffffff" stroke-width="0.35">0.9300</text>
<text x="906.5" y="167.5" style="font-family:'Liberation Sans',sans-serif;font-size:11px;letter-spacing:-0.3px" fill="#ffffff" stroke="#ffffff" stroke-width="0.35">0.9200</text>
<text x="907.5" y="277.5" style="font-family:'Liberation Sans',sans-serif;font-size:11px;letter-spacing:-0.3px" fill="#ffffff" stroke="#ffffff" stroke-width="0.35">+0.000</text>
<text x="907" y="359.5" style="font-family:'Liberation Sans',sans-serif;font-size:11px;letter-spacing:-0.3px" fill="#ffffff" stroke="#ffffff" stroke-width="0.35">50</text>
<rect x="899" y="189" width="48" height="21" fill="#ffffff"/>
<text x="908" y="202.5" style="font-family:'Liberation Sans',sans-serif;font-size:11px;letter-spacing:-0.3px" fill="#3c4650">0.9106</text>
<text x="43.8" y="421" text-anchor="middle" style="font-family:'Liberation Sans',sans-serif;font-size:10.5px;letter-spacing:-0.3px" fill="#ffffff" stroke="#ffffff" stroke-width="0.35">21</text>
<text x="67.8" y="421" text-anchor="middle" style="font-family:'Liberation Sans',sans-serif;font-size:10.5px;letter-spacing:-0.3px" fill="#ffffff" stroke="#ffffff" stroke-width="0.35">22</text>
<text x="92.8" y="421" text-anchor="middle" style="font-family:'Liberation Sans',sans-serif;font-size:10.5px;letter-spacing:-0.3px" fill="#ffffff" stroke="#ffffff" stroke-width="0.35">23</text>
<text x="116.8" y="421" text-anchor="middle" style="font-family:'Liberation Sans',sans-serif;font-size:10.5px;letter-spacing:-0.3px" fill="#ffffff" stroke="#ffffff" stroke-width="0.35">24</text>
<text x="141.8" y="421" text-anchor="middle" style="font-family:'Liberation Sans',sans-serif;font-size:10.5px;letter-spacing:-0.3px" fill="#ffffff" stroke="#ffffff" stroke-width="0.35">27</text>
<text x="166.8" y="421" text-anchor="middle" style="font-family:'Liberation Sans',sans-serif;font-size:10.5px;letter-spacing:-0.3px" fill="#ffffff" stroke="#ffffff" stroke-width="0.35">28</text>
<text x="190.8" y="421" text-anchor="middle" style="font-family:'Liberation Sans',sans-serif;font-size:10.5px;letter-spacing:-0.3px" fill="#ffffff" stroke="#ffffff" stroke-width="0.35">29</text>
<text x="215.8" y="421" text-anchor="middle" style="font-family:'Liberation Sans',sans-serif;font-size:10.5px;letter-spacing:-0.3px" fill="#ffffff" stroke="#ffffff" stroke-width="0.35">30</text>
<text x="239.8" y="421" text-anchor="middle" style="font-family:'Liberation Sans',sans-serif;font-size:10.5px;letter-spacing:-0.3px" fill="#ffffff" stroke="#ffffff" stroke-width="0.35">31</text>
<text x="264.8" y="421" text-anchor="middle" style="font-family:'Liberation Sans',sans-serif;font-size:10.5px;letter-spacing:-0.3px" fill="#ffffff" stroke="#ffffff" stroke-width="0.35">3</text>
<text x="288.8" y="421" text-anchor="middle" style="font-family:'Liberation Sans',sans-serif;font-size:10.5px;letter-spacing:-0.3px" fill="#ffffff" stroke="#ffffff" stroke-width="0.35">4</text>
<text x="313.8" y="421" text-anchor="middle" style="font-family:'Liberation Sans',sans-serif;font-size:10.5px;letter-spacing:-0.3px" fill="#ffffff" stroke="#ffffff" stroke-width="0.35">5</text>
<text x="338.8" y="421" text-anchor="middle" style="font-family:'Liberation Sans',sans-serif;font-size:10.5px;letter-spacing:-0.3px" fill="#ffffff" stroke="#ffffff" stroke-width="0.35">6</text>
<text x="362.8" y="421" text-anchor="middle" style="font-family:'Liberation Sans',sans-serif;font-size:10.5px;letter-spacing:-0.3px" fill="#ffffff" stroke="#ffffff" stroke-width="0.35">7</text>
<text x="387.8" y="421" text-anchor="middle" style="font-family:'Liberation Sans',sans-serif;font-size:10.5px;letter-spacing:-0.3px" fill="#ffffff" stroke="#ffffff" stroke-width="0.35">10</text>
<text x="411.8" y="421" text-anchor="middle" style="font-family:'Liberation Sans',sans-serif;font-size:10.5px;letter-spacing:-0.3px" fill="#ffffff" stroke="#ffffff" stroke-width="0.35">11</text>
<text x="436.8" y="421" text-anchor="middle" style="font-family:'Liberation Sans',sans-serif;font-size:10.5px;letter-spacing:-0.3px" fill="#ffffff" stroke="#ffffff" stroke-width="0.35">12</text>
<text x="461.8" y="421" text-anchor="middle" style="font-family:'Liberation Sans',sans-serif;font-size:10.5px;letter-spacing:-0.3px" fill="#ffffff" stroke="#ffffff" stroke-width="0.35">13</text>
<text x="485.8" y="421" text-anchor="middle" style="font-family:'Liberation Sans',sans-serif;font-size:10.5px;letter-spacing:-0.3px" fill="#ffffff" stroke="#ffffff" stroke-width="0.35">14</text>
<text x="510.8" y="421" text-anchor="middle" style="font-family:'Liberation Sans',sans-serif;font-size:10.5px;letter-spacing:-0.3px" fill="#ffffff" stroke="#ffffff" stroke-width="0.35">17</text>
<text x="534.8" y="421" text-anchor="middle" style="font-family:'Liberation Sans',sans-serif;font-size:10.5px;letter-spacing:-0.3px" fill="#ffffff" stroke="#ffffff" stroke-width="0.35">18</text>
<text x="559.8" y="421" text-anchor="middle" style="font-family:'Liberation Sans',sans-serif;font-size:10.5px;letter-spacing:-0.3px" fill="#ffffff" stroke="#ffffff" stroke-width="0.35">19</text>
<text x="583.8" y="421" text-anchor="middle" style="font-family:'Liberation Sans',sans-serif;font-size:10.5px;letter-spacing:-0.3px" fill="#ffffff" stroke="#ffffff" stroke-width="0.35">20</text>
<text x="608.8" y="421" text-anchor="middle" style="font-family:'Liberation Sans',sans-serif;font-size:10.5px;letter-spacing:-0.3px" fill="#ffffff" stroke="#ffffff" stroke-width="0.35">21</text>
<text x="633.8" y="421" text-anchor="middle" style="font-family:'Liberation Sans',sans-serif;font-size:10.5px;letter-spacing:-0.3px" fill="#ffffff" stroke="#ffffff" stroke-width="0.35">24</text>
<text x="657.8" y="421" text-anchor="middle" style="font-family:'Liberation Sans',sans-serif;font-size:10.5px;letter-spacing:-0.3px" fill="#ffffff" stroke="#ffffff" stroke-width="0.35">25</text>
<text x="682.8" y="421" text-anchor="middle" style="font-family:'Liberation Sans',sans-serif;font-size:10.5px;letter-spacing:-0.3px" fill="#ffffff" stroke="#ffffff" stroke-width="0.35">26</text>
<text x="706.8" y="421" text-anchor="middle" style="font-family:'Liberation Sans',sans-serif;font-size:10.5px;letter-spacing:-0.3px" fill="#ffffff" stroke="#ffffff" stroke-width="0.35">27</text>
<text x="731.8" y="421" text-anchor="middle" style="font-family:'Liberation Sans',sans-serif;font-size:10.5px;letter-spacing:-0.3px" fill="#ffffff" stroke="#ffffff" stroke-width="0.35">28</text>
<text x="756.8" y="421" text-anchor="middle" style="font-family:'Liberation Sans',sans-serif;font-size:10.5px;letter-spacing:-0.3px" fill="#ffffff" stroke="#ffffff" stroke-width="0.35">31</text>
<text x="780.8" y="421" text-anchor="middle" style="font-family:'Liberation Sans',sans-serif;font-size:10.5px;letter-spacing:-0.3px" fill="#ffffff" stroke="#ffffff" stroke-width="0.35">1</text>
<text x="805.8" y="421" text-anchor="middle" style="font-family:'Liberation Sans',sans-serif;font-size:10.5px;letter-spacing:-0.3px" fill="#ffffff" stroke="#ffffff" stroke-width="0.35">2</text>
<text x="829.8" y="421" text-anchor="middle" style="font-family:'Liberation Sans',sans-serif;font-size:10.5px;letter-spacing:-0.3px" fill="#ffffff" stroke="#ffffff" stroke-width="0.35">3</text>
<text x="854.8" y="421" text-anchor="middle" style="font-family:'Liberation Sans',sans-serif;font-size:10.5px;letter-spacing:-0.3px" fill="#ffffff" stroke="#ffffff" stroke-width="0.35">4</text>
<text x="878.8" y="421" text-anchor="middle" style="font-family:'Liberation Sans',sans-serif;font-size:10.5px;letter-spacing:-0.3px" fill="#ffffff" stroke="#ffffff" stroke-width="0.35">5</text>
<defs><linearGradient id="sg" x1="0" y1="0" x2="1" y2="1"><stop offset="0" stop-color="#526070"/><stop offset="1" stop-color="#6e7d8e"/></linearGradient></defs>
<path d="M18 375.5 H84 L85.5 377 V393 L84 394.5 H18 Z" fill="url(#sg)" stroke="#c8d8e2" stroke-width="1"/>
<line x1="18" y1="375" x2="18" y2="402" stroke="#d4eeee" stroke-width="2"/>
<text x="24.3" y="389" style="font-family:'Liberation Sans',sans-serif;font-size:11px" fill="#ffffff" stroke="#ffffff" stroke-width="0.35">Июль 2020</text>
<path d="M266 375.5 H324 L325.5 377 V393 L324 394.5 H266 Z" fill="url(#sg)" stroke="#c8d8e2" stroke-width="1"/>
<line x1="266" y1="375" x2="266" y2="402" stroke="#d4eeee" stroke-width="2"/>
<text x="272.3" y="389" style="font-family:'Liberation Sans',sans-serif;font-size:11px" fill="#ffffff" stroke="#ffffff" stroke-width="0.35">Авг 2020</text>
<path d="M782 375.5 H840 L841.5 377 V393 L840 394.5 H782 Z" fill="url(#sg)" stroke="#c8d8e2" stroke-width="1"/>
<line x1="782" y1="375" x2="782" y2="402" stroke="#d4eeee" stroke-width="2"/>
<text x="788.3" y="389" style="font-family:'Liberation Sans',sans-serif;font-size:11px" fill="#ffffff" stroke="#ffffff" stroke-width="0.35">Сен 2020</text>
</svg>
</body></html>
